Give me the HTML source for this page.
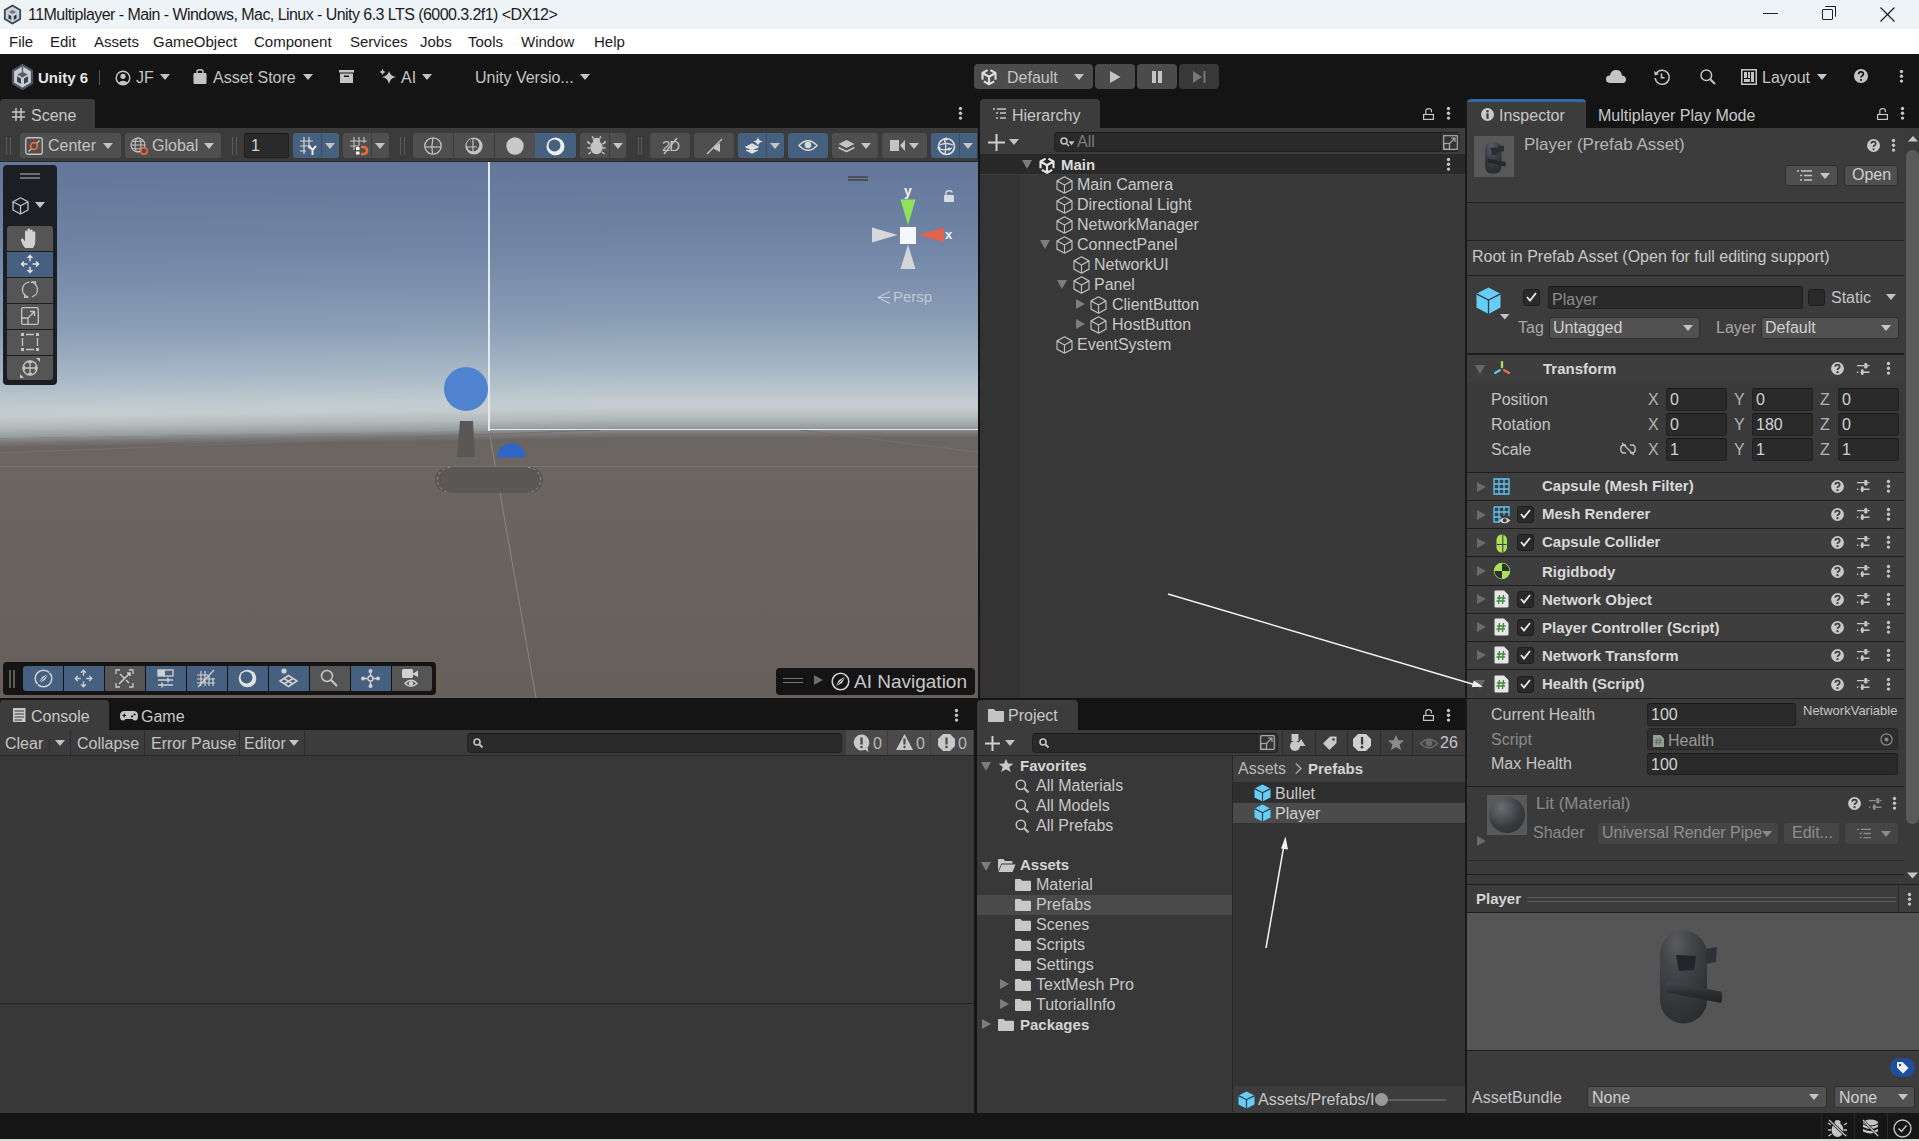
<!DOCTYPE html>
<html><head><meta charset="utf-8">
<style>
*{box-sizing:border-box;margin:0;padding:0}
html,body{width:1919px;height:1141px;overflow:hidden;background:#141414;font-family:"Liberation Sans",sans-serif}
.a{position:absolute}
.t{position:absolute;white-space:nowrap;font-size:16px;line-height:20px;color:#d2d2d2}
.b{font-weight:bold}
.dk{color:#1b1b1b;font-size:15px}
.btn{position:absolute;background:#585858;border-radius:3px}
.fld{position:absolute;background:#2a2a2a;border:1px solid #212121;border-top-color:#1a1a1a;border-radius:3px}
.dd{position:absolute;background:#515151;border:1px solid #303030;border-radius:3px}
.hl{position:absolute;height:1px;background:#232323}
.vl{position:absolute;width:1px;background:#232323}
svg{position:absolute;overflow:visible}
.tab{position:absolute;background:#3c3c3c;border-radius:4px 4px 0 0}
.car{position:absolute;width:0;height:0;border-left:5px solid transparent;border-right:5px solid transparent;border-top:6px solid #c4c4c4}
.tri{position:absolute;width:0;height:0;border-left:5px solid transparent;border-right:5px solid transparent;border-top:9px solid #7d7d7d}
.trir{position:absolute;width:0;height:0;border-top:5px solid transparent;border-bottom:5px solid transparent;border-left:9px solid #7d7d7d}
.kb{position:absolute;width:3px;height:13px;background:radial-gradient(circle at 1.5px 1.5px,#c4c4c4 1.5px,transparent 1.6px) 0 0/3px 5px repeat-y}
</style></head><body>
<!-- TITLE BAR -->
<div class="a" style="left:0;top:0;width:1919px;height:29px;background:#eef3f8"></div>
<svg style="left:4px;top:5px" width="17" height="19" viewBox="0 0 17 19"><path d="M8.5 0.5 L16.2 5 V14 L8.5 18.5 L0.8 14 V5Z" fill="#c9d2da" stroke="#3c4650" stroke-width="1.8" stroke-linejoin="round"/><path d="M8.5 5 L12 7 L8.5 9 L5 7Z" fill="#6a7682"/><path d="M4.5 9.5 L7.2 11 V15 L4.5 13.5Z M12.5 9.5 L9.8 11 V15 L12.5 13.5Z" fill="#2f3840"/></svg>
<div class="t dk" style="left:28px;top:5px;font-size:16px;letter-spacing:-0.55px">11Multiplayer - Main - Windows, Mac, Linux - Unity 6.3 LTS (6000.3.2f1) &lt;DX12&gt;</div>
<div class="a" style="left:1763px;top:13px;width:15px;height:1px;background:#222"></div>
<div class="a" style="left:1822px;top:9px;width:11px;height:11px;border:1px solid #222;border-radius:1px"></div>
<div class="a" style="left:1825px;top:6px;width:11px;height:11px;border-top:1px solid #222;border-right:1px solid #222;border-radius:1px"></div>
<svg style="left:1880px;top:7px" width="15" height="15"><path d="M0.5 0.5 L14.5 14.5 M14.5 0.5 L0.5 14.5" stroke="#222" stroke-width="1.3"/></svg>
<!-- MENU -->
<div class="a" style="left:0;top:29px;width:1919px;height:25px;background:#fff"></div>
<div class="t dk" style="left:9px;top:32px">File</div>
<div class="t dk" style="left:50px;top:32px">Edit</div>
<div class="t dk" style="left:94px;top:32px">Assets</div>
<div class="t dk" style="left:153px;top:32px">GameObject</div>
<div class="t dk" style="left:254px;top:32px">Component</div>
<div class="t dk" style="left:350px;top:32px">Services</div>
<div class="t dk" style="left:420px;top:32px">Jobs</div>
<div class="t dk" style="left:468px;top:32px">Tools</div>
<div class="t dk" style="left:521px;top:32px">Window</div>
<div class="t dk" style="left:594px;top:32px">Help</div>
<!-- MAIN TOOLBAR -->
<div class="a" style="left:0;top:54px;width:1919px;height:46px;background:#141414"></div>
<svg style="left:12px;top:64px" width="21" height="26" viewBox="0 0 21 26"><path d="M10.5 1 L20 6.7 V19.3 L10.5 25 L1 19.3 V6.7Z" fill="#c8ccd2" stroke="#4a5560" stroke-width="2.2" stroke-linejoin="round"/><path d="M10.5 8.5 L14.2 10.6 L10.5 12.7 L6.8 10.6Z M10.5 3 V9" fill="#55606a" stroke="#55606a" stroke-width="1.4"/><path d="M5 12.3 L9 14.6 V20 L5 17.7Z M16 12.3 L12 14.6 V20 L16 17.7Z" fill="#3a444e"/></svg>
<div class="t b" style="left:38px;top:68px;font-size:15px;color:#e6e6e6">Unity 6</div>
<div class="a" style="left:99px;top:70px;width:1px;height:15px;background:#555"></div>
<svg style="left:115px;top:70px" width="16" height="16" viewBox="0 0 16 16"><circle cx="8" cy="8" r="6.8" fill="none" stroke="#c4c4c4" stroke-width="1.5"/><circle cx="8" cy="6.3" r="2.6" fill="#c4c4c4"/><path d="M3.3 12.8 Q8 8.5 12.7 12.8 Q8 16 3.3 12.8Z" fill="#c4c4c4"/></svg>
<div class="t" style="left:136px;top:68px;color:#c4c4c4">JF</div>
<div class="car" style="left:160px;top:74px"></div>
<svg style="left:193px;top:69px" width="14" height="15" viewBox="0 0 14 15"><rect x="0.5" y="4" width="13" height="11" rx="1" fill="#c4c4c4"/><path d="M4 5 V2.5 Q4 0.8 7 0.8 Q10 0.8 10 2.5 V5" fill="none" stroke="#c4c4c4" stroke-width="1.4"/></svg>
<div class="t" style="left:213px;top:68px;color:#c4c4c4">Asset Store</div>
<div class="car" style="left:303px;top:74px"></div>
<svg style="left:339px;top:70px" width="15" height="13" viewBox="0 0 15 13"><rect x="0" y="0" width="15" height="2.5" fill="#c4c4c4"/><rect x="1" y="3.5" width="13" height="9.5" fill="#c4c4c4"/><rect x="5" y="5.5" width="5" height="1.5" fill="#141414"/></svg>
<svg style="left:379px;top:69px" width="18" height="15" viewBox="0 0 18 15"><path d="M10 2 Q11 7 17 8 Q11 9 10 15 Q9 9 3 8 Q9 7 10 2Z" fill="#c4c4c4"/><path d="M3.5 0 Q4 2.5 6.5 3 Q4 3.5 3.5 6 Q3 3.5 0.5 3 Q3 2.5 3.5 0Z" fill="#c4c4c4"/></svg>
<div class="t" style="left:401px;top:68px;color:#c4c4c4">AI</div>
<div class="car" style="left:422px;top:74px"></div>
<div class="t" style="left:475px;top:68px;color:#c4c4c4">Unity Versio...</div>
<div class="car" style="left:580px;top:74px"></div>
<!-- play controls -->
<div class="a" style="left:974px;top:64px;width:119px;height:25px;background:#4b4b4b;border-radius:4px"></div>
<svg style="left:981px;top:68px" width="16" height="17" viewBox="0 0 17 18"><path d="M1.6 12.5 V5.3 L7 2.2 M15.4 12.5 V5.3 L10 2.2 M1.6 5.3 L8.5 9.3 L15.4 5.3 M8.5 9.3 V16.8 M3 14.2 L8.5 17.2 L14 14.2" fill="none" stroke="#dcdcdc" stroke-width="2.3" stroke-linejoin="round"/></svg>
<div class="t" style="left:1007px;top:68px;color:#c4c4c4">Default</div>
<div class="car" style="left:1074px;top:74px"></div>
<div class="a" style="left:1095px;top:64px;width:40px;height:25px;background:#4b4b4b;border-radius:4px"></div>
<svg style="left:1110px;top:71px" width="11" height="12"><path d="M0 0 L10.5 6 L0 12Z" fill="#c4c4c4"/></svg>
<div class="a" style="left:1137px;top:64px;width:40px;height:25px;background:#4b4b4b;border-radius:4px"></div>
<div class="a" style="left:1152px;top:71px;width:3.5px;height:12px;background:#c4c4c4"></div>
<div class="a" style="left:1158px;top:71px;width:3.5px;height:12px;background:#c4c4c4"></div>
<div class="a" style="left:1179px;top:64px;width:40px;height:25px;background:#383838;border-radius:4px"></div>
<svg style="left:1193px;top:71px" width="13" height="12"><path d="M0 0 L9 6 L0 12Z" fill="#777"/><rect x="10.5" y="0" width="2" height="12" fill="#777"/></svg>
<!-- right toolbar icons -->
<svg style="left:1606px;top:70px" width="20" height="13" viewBox="0 0 20 13"><path d="M4.5 13 Q0 13 0 9.2 Q0 5.8 3.8 5.6 Q5 0 10.2 0 Q15.2 0 16 5.4 Q20 5.8 20 9.4 Q20 13 16 13Z" fill="#c4c4c4"/></svg>
<svg style="left:1654px;top:69px" width="16" height="16" viewBox="0 0 16 16"><path d="M2.3 4.5 A7 7 0 1 1 1.2 9" fill="none" stroke="#c4c4c4" stroke-width="1.5"/><path d="M0 2 L0.8 6.5 L5 5.3Z" fill="#c4c4c4"/><path d="M7.5 4.5 V8.8 H10.5" fill="none" stroke="#c4c4c4" stroke-width="1.6"/></svg>
<svg style="left:1700px;top:69px" width="16" height="16" viewBox="0 0 16 16"><circle cx="6.3" cy="6.3" r="5.3" fill="none" stroke="#c4c4c4" stroke-width="1.5"/><path d="M10.2 10.2 L15 15" stroke="#c4c4c4" stroke-width="2"/></svg>
<svg style="left:1741px;top:69px" width="16" height="16" viewBox="0 0 16 16"><rect x="0.75" y="0.75" width="14.5" height="14.5" fill="none" stroke="#c4c4c4" stroke-width="1.5"/><rect x="3" y="3" width="3" height="6" fill="#c4c4c4"/><rect x="7" y="3" width="2" height="6" fill="#c4c4c4"/><rect x="10" y="3" width="3" height="10" fill="#c4c4c4"/><rect x="3" y="10" width="6" height="3" fill="#c4c4c4"/></svg>
<div class="t" style="left:1762px;top:68px;color:#c4c4c4">Layout</div>
<div class="car" style="left:1817px;top:74px"></div>
<svg style="left:1854px;top:69px" width="14" height="14" viewBox="0 0 14 14"><circle cx="7" cy="7" r="7" fill="#c4c4c4"/><path d="M4.6 5.2 Q4.6 2.8 7 2.8 Q9.4 2.8 9.4 5 Q9.4 6.3 7.9 7 Q7 7.4 7 8.6" fill="none" stroke="#141414" stroke-width="1.7"/><circle cx="7" cy="11" r="1.1" fill="#141414"/></svg>
<svg style="left:1899px;top:69px" width="5" height="15"><circle cx="2.5" cy="2.5" r="1.7" fill="#c4c4c4"/><circle cx="2.5" cy="7.3" r="1.7" fill="#c4c4c4"/><circle cx="2.5" cy="12.1" r="1.7" fill="#c4c4c4"/></svg>
<!-- TAB STRIP (top) -->
<div class="tab" style="left:0;top:99px;width:95px;height:30px"></div>
<svg style="left:12px;top:108px" width="13" height="13" viewBox="0 0 13 13"><path d="M4 0 V13 M9 0 V13 M0 4 H13 M0 9 H13" stroke="#c4c4c4" stroke-width="1.5"/></svg>
<div class="t" style="left:31px;top:106px;color:#c8c8c8">Scene</div>
<svg style="left:958px;top:106px" width="5" height="15"><circle cx="2.5" cy="2.5" r="1.7" fill="#c4c4c4"/><circle cx="2.5" cy="7.3" r="1.7" fill="#c4c4c4"/><circle cx="2.5" cy="12.1" r="1.7" fill="#c4c4c4"/></svg>
<!-- SCENE TOOLBAR -->
<div class="a" style="left:0;top:128px;width:978px;height:34px;background:#3b3b3b"></div>
<div class="a" style="left:6px;top:137px;width:1px;height:18px;background:#5a5a5a"></div>
<div class="a" style="left:10px;top:137px;width:1px;height:18px;background:#5a5a5a"></div>
<div class="btn" style="left:20px;top:133px;width:101px;height:25px;background:#4f4f4f"></div>
<svg style="left:25px;top:137px" width="18" height="18" viewBox="0 0 18 18"><rect x="0.75" y="0.75" width="16.5" height="16.5" rx="2" fill="none" stroke="#c4c4c4" stroke-width="1.3"/><path d="M3.5 14.5 L14.5 3.5" stroke="#c4c4c4" stroke-width="1.2"/><circle cx="9" cy="9" r="3.4" fill="#4f4f4f" stroke="#f06a35" stroke-width="1.7"/></svg>
<div class="t" style="left:48px;top:136px;color:#c4c4c4">Center</div>
<div class="car" style="left:103px;top:143px"></div>
<div class="btn" style="left:125px;top:133px;width:96px;height:25px;background:#4f4f4f"></div>
<svg style="left:130px;top:137px" width="19" height="19" viewBox="0 0 19 19"><circle cx="8" cy="8" r="7" fill="none" stroke="#c4c4c4" stroke-width="1.2"/><ellipse cx="8" cy="8" rx="3" ry="7" fill="none" stroke="#c4c4c4" stroke-width="1.1"/><path d="M1 8 H15 M2.5 4.2 H13.5 M2.5 11.8 H13.5" stroke="#c4c4c4" stroke-width="1.1"/><circle cx="14" cy="14" r="3.2" fill="#4f4f4f" stroke="#f06a35" stroke-width="1.6"/></svg>
<div class="t" style="left:152px;top:136px;color:#c4c4c4">Global</div>
<div class="car" style="left:204px;top:143px"></div>
<div class="a" style="left:232px;top:137px;width:1px;height:18px;background:#5a5a5a"></div>
<div class="a" style="left:236px;top:137px;width:1px;height:18px;background:#5a5a5a"></div>
<div class="fld" style="left:244px;top:133px;width:45px;height:25px;background:#2a2a2a"></div>
<div class="t" style="left:251px;top:136px;color:#d2d2d2">1</div>
<div class="btn" style="left:293px;top:133px;width:46px;height:25px;background:#46607f"></div>
<div class="a" style="left:321px;top:133px;width:1px;height:25px;background:#3b4f68"></div>
<svg style="left:300px;top:137px" width="19" height="18" viewBox="0 0 19 18"><path d="M4 0 V17 M9 0 V12 M0 4 H13 M0 9 H11 M0 14 H6" stroke="#d8d8d8" stroke-width="1.2"/><path d="M9 9 L12.5 13 L16 9 M12.5 13 V18" fill="none" stroke="#e8e8e8" stroke-width="2"/></svg>
<div class="car" style="left:325px;top:143px"></div>
<div class="btn" style="left:343px;top:133px;width:46px;height:25px;background:#4f4f4f"></div>
<div class="a" style="left:371px;top:133px;width:1px;height:25px;background:#3b3b3b"></div>
<svg style="left:350px;top:137px" width="19" height="19" viewBox="0 0 19 19"><path d="M4 0 V13 M9 0 V9 M14 0 V6 M0 4 H17 M0 9 H9" stroke="#c4c4c4" stroke-width="1.1"/><path d="M11 10 H13.5 Q17 10 17 13.5 Q17 17 13.5 17 H11" fill="none" stroke="#f06a35" stroke-width="2.5"/><rect x="6" y="10" width="3.5" height="3" fill="#fff"/><rect x="6" y="14.5" width="3.5" height="3" fill="#fff"/></svg>
<div class="car" style="left:375px;top:143px"></div>
<div class="a" style="left:400px;top:137px;width:1px;height:18px;background:#5a5a5a"></div>
<div class="a" style="left:404px;top:137px;width:1px;height:18px;background:#5a5a5a"></div>
<div class="btn" style="left:413px;top:133px;width:163px;height:25px;background:#4f4f4f"></div>
<div class="a" style="left:453px;top:133px;width:1px;height:25px;background:#3b3b3b"></div>
<div class="a" style="left:494px;top:133px;width:1px;height:25px;background:#3b3b3b"></div>
<div class="a" style="left:535px;top:133px;width:41px;height:25px;background:#46607f;border-radius:0 3px 3px 0"></div>
<svg style="left:424px;top:137px" width="18" height="18" viewBox="0 0 18 18"><circle cx="9" cy="9" r="8.2" fill="none" stroke="#c4c4c4" stroke-width="1.3"/><path d="M1 10 H17" stroke="#c4c4c4" stroke-width="1.2"/><path d="M9 0.8 Q7 9 8.5 17.2" fill="none" stroke="#c4c4c4" stroke-width="1.2"/></svg>
<svg style="left:465px;top:137px" width="18" height="18" viewBox="0 0 18 18"><circle cx="9" cy="9" r="8.6" fill="#c4c4c4"/><circle cx="8" cy="8" r="6.3" fill="#4f4f4f"/><path d="M1.5 10 H12 M8 1.5 V14.5" stroke="#c4c4c4" stroke-width="1.2"/></svg>
<svg style="left:506px;top:137px" width="18" height="18" viewBox="0 0 18 18"><circle cx="9" cy="9" r="8.7" fill="#c8c8c8"/></svg>
<svg style="left:546px;top:137px" width="19" height="19" viewBox="0 0 19 19"><circle cx="9.5" cy="9.5" r="9" fill="#eee"/><circle cx="8.5" cy="8.5" r="6" fill="#46607f"/></svg>
<div class="btn" style="left:580px;top:133px;width:46px;height:25px;background:#4f4f4f"></div>
<div class="a" style="left:609px;top:133px;width:1px;height:25px;background:#3b3b3b"></div>
<svg style="left:587px;top:136px" width="19" height="19" viewBox="0 0 19 19"><ellipse cx="9.5" cy="11.5" rx="6.2" ry="6.8" fill="#c4c4c4"/><ellipse cx="9.5" cy="4.5" rx="3.6" ry="2.8" fill="#c4c4c4"/><path d="M6.5 2.5 L5 0.5 M12.5 2.5 L14 0.5 M3.5 8 L1 6.5 L1 5 M15.5 8 L18 6.5 L18 5 M3.2 12 H0.5 M15.8 12 H18.5 M4 16 L1.5 18 M15 16 L17.5 18" fill="none" stroke="#c4c4c4" stroke-width="1.5"/></svg>
<div class="car" style="left:613px;top:143px"></div>
<div class="a" style="left:638px;top:137px;width:1px;height:18px;background:#5a5a5a"></div>
<div class="a" style="left:641px;top:137px;width:1px;height:18px;background:#5a5a5a"></div>
<div class="btn" style="left:650px;top:133px;width:40px;height:25px;background:#4f4f4f"></div>
<div class="t" style="left:662px;top:136px;color:#c4c4c4;font-size:15px;letter-spacing:-1px">2D</div>
<svg style="left:662px;top:137px" width="17" height="18"><path d="M2 17 L15 1" stroke="#c4c4c4" stroke-width="1.4"/></svg>
<div class="btn" style="left:694px;top:133px;width:40px;height:25px;background:#4f4f4f"></div>
<svg style="left:706px;top:138px" width="16" height="16" viewBox="0 0 16 16"><path d="M8 9 L14 5 L14 14 L8 11Z" fill="#c4c4c4"/><path d="M1 16 L16 1" stroke="#c4c4c4" stroke-width="1.4"/></svg>
<div class="btn" style="left:738px;top:133px;width:46px;height:25px;background:#46607f"></div>
<div class="a" style="left:766px;top:133px;width:1px;height:25px;background:#3b4f68"></div>
<svg style="left:746px;top:137px" width="17" height="17" viewBox="0 0 17 17"><path d="M0 10 L6 7 L12 10 L6 13Z M0 13 L6 16 L12 13" fill="#e0e0e0" stroke="#e0e0e0" stroke-width="1.2"/><path d="M12 0 Q12.7 4 17 4.5 Q12.7 5 12 9 Q11.3 5 7 4.5 Q11.3 4 12 0Z" fill="#e0e0e0"/></svg>
<div class="car" style="left:770px;top:143px"></div>
<div class="btn" style="left:788px;top:133px;width:40px;height:25px;background:#46607f"></div>
<svg style="left:798px;top:139px" width="20" height="13" viewBox="0 0 20 13"><path d="M1 6.5 Q10 -3 19 6.5 Q10 16 1 6.5Z" fill="none" stroke="#d8d8d8" stroke-width="1.5"/><circle cx="10" cy="6" r="3.3" fill="#d8d8d8"/></svg>
<div class="btn" style="left:832px;top:133px;width:46px;height:25px;background:#4f4f4f"></div>
<svg style="left:838px;top:139px" width="17" height="14" viewBox="0 0 17 14"><path d="M0.5 5 L8.5 1 L16.5 5 L8.5 9Z" fill="#c4c4c4"/><path d="M0.5 8.5 L8.5 12.5 L16.5 8.5" fill="none" stroke="#c4c4c4" stroke-width="1.6"/></svg>
<div class="car" style="left:861px;top:143px"></div>
<div class="btn" style="left:882px;top:133px;width:45px;height:25px;background:#4f4f4f"></div>
<svg style="left:890px;top:139px" width="15" height="13" viewBox="0 0 15 13"><rect x="0" y="1" width="9" height="11" fill="#c4c4c4"/><path d="M10 6.5 L15 1 V12Z" fill="#c4c4c4"/></svg>
<div class="car" style="left:909px;top:143px"></div>
<div class="btn" style="left:931px;top:133px;width:46px;height:25px;background:#46607f;border-radius:3px 0 0 3px"></div>
<div class="a" style="left:959px;top:133px;width:1px;height:25px;background:#3b4f68"></div>
<svg style="left:937px;top:137px" width="19" height="19" viewBox="0 0 19 19"><circle cx="9.5" cy="9.5" r="8" fill="none" stroke="#e0e0e0" stroke-width="1.6"/><path d="M3 8 Q9 5 16 8 M7 2 Q10 9 8 17 M2 12 Q9 14 15 11" fill="none" stroke="#e0e0e0" stroke-width="1.3"/><circle cx="9" cy="2" r="1.6" fill="#e0e0e0"/><circle cx="2" cy="11" r="1.6" fill="#e0e0e0"/><circle cx="12" cy="12" r="1.6" fill="#e0e0e0"/></svg>
<div class="car" style="left:963px;top:143px"></div>
<div class="a" style="left:0;top:161px;width:977px;height:1px;background:#282828"></div>
<!-- SCENE VIEW -->
<div class="a" style="left:0;top:162px;width:978px;height:40px;background:#63779a"></div>
<div class="a" style="left:0;top:429px;width:978px;height:269px;background:linear-gradient(to bottom,#8c9091 0px,#7a7979 4px,#6c6663 9px,#6a6461 40%,#665f5b 100%)"></div>
<div class="a" style="left:620px;top:162px;width:358px;height:267px;background:linear-gradient(to bottom,#63779a 0%,#7084a6 30%,#8a9eb6 60%,#a8b8c6 78%,#c2ccd0 89%,#c4ccce 92%,#b3babc 96%,#9aa1a3 99%,#8f9697 100%)"></div>
<div class="a" style="left:0;top:162px;width:621px;height:267px;transform-origin:621px 0;transform:skewY(-0.85deg);background:linear-gradient(to bottom,#63779a 0%,#7084a6 30%,#8a9eb6 60%,#a8b8c6 78%,#c2ccd0 89%,#c4ccce 92%,#b3babc 96%,#9aa1a3 99%,#8f9697 100%)"></div>
<div class="a" style="left:0;top:429px;width:621px;height:12px;transform-origin:621px 0;transform:skewY(-0.85deg);background:linear-gradient(to bottom,#8c9091 0px,#7a7979 4px,#6c6663 9px,#6a6461 12px)"></div>
<div class="a" style="left:0;top:466px;width:978px;height:1px;background:#76716f"></div>
<svg style="left:0;top:162px" width="978" height="536"><path d="M489 268 L536 536" stroke="#8a8682" stroke-width="1"/><path d="M800 268 L978 290" stroke="#75706e" stroke-width="1"/><path d="M0 291 L600 268" stroke="#75706e" stroke-width="1"/></svg>
<div class="a" style="left:488px;top:162px;width:2px;height:269px;background:#e6e9ec"></div>
<div class="a" style="left:488px;top:428.5px;width:490px;height:1.8px;background:#e6e6e6"></div>
<div class="a" style="left:444px;top:367px;width:44px;height:44px;border-radius:50%;background:#5083cf"></div>
<svg style="left:457px;top:421px" width="19" height="37"><path d="M3 0 H16 L18 36 H0Z" fill="#5a5857"/></svg>
<svg style="left:497px;top:442px" width="29" height="16"><path d="M0 15.5 A14 14 0 0 1 28.5 15.5Z" fill="#2f67c4"/></svg>
<div class="a" style="left:435px;top:467px;width:108px;height:26px;border-radius:13px;background:#5a5755"></div><svg style="left:435px;top:467px" width="108" height="26"><path d="M15 0.5 A12.5 12.5 0 0 0 15 25.5 M93 0.5 A12.5 12.5 0 0 1 93 25.5" fill="none" stroke="#9a9794" stroke-width="1" stroke-dasharray="2.5 3"/></svg>
<!-- gizmo -->
<div class="a" style="left:848px;top:176px;width:20px;height:1.5px;background:#4d4f54"></div>
<div class="a" style="left:848px;top:179px;width:20px;height:1.5px;background:#4d4f54"></div>
<div class="t b" style="left:904px;top:181px;font-size:14px;color:#f0f0f0">y</div>
<svg style="left:870px;top:195px" width="90" height="80"><path d="M30.5 4.5 L45.5 4.5 L38 30Z" fill="#8fe35a"/><path d="M48.5 40 L74 32.5 L74 47Z" fill="#e4604f"/><path d="M27.5 40 L2 32.5 L2 47.5Z" fill="#d8d8d8"/><path d="M38 49.5 L30.5 74 L45.5 74Z" fill="#d5d5d5"/><rect x="30" y="32" width="16" height="17" fill="#f4f7fb"/></svg>
<div class="t b" style="left:945px;top:225px;font-size:13px;color:#f0f0f0">x</div>
<svg style="left:944px;top:190px" width="10" height="12"><path d="M2 5 V3 Q2 0.8 5 0.8 Q8 0.8 8 2.5" fill="none" stroke="#d8dce0" stroke-width="1.4"/><rect x="0" y="5" width="10" height="7" rx="1" fill="#d8dce0"/></svg>
<svg style="left:877px;top:291px" width="14" height="13"><path d="M13 0.5 L1 6.5 L13 12.5 M1 6.5 H13" fill="none" stroke="#c3ccd6" stroke-width="1.1"/></svg>
<div class="t" style="left:893px;top:287px;font-size:15px;color:#c0c9d3">Persp</div>
<!-- left tools overlay -->
<div class="a" style="left:3px;top:165px;width:54px;height:220px;background:#1b1e23;border-radius:4px"></div>
<div class="a" style="left:20px;top:173px;width:20px;height:1.5px;background:#6a6d72"></div>
<div class="a" style="left:20px;top:177px;width:20px;height:1.5px;background:#6a6d72"></div>
<svg style="left:12px;top:197px" width="18" height="18" viewBox="0 0 18 18"><path d="M8.5 0.8 L16 4.8 V13 L8.5 17 L1 13 V4.8Z M1 4.8 L8.5 8.8 L16 4.8 M8.5 8.8 V17" fill="none" stroke="#c4c4c4" stroke-width="1.3" stroke-linejoin="round"/></svg>
<div class="car" style="left:35px;top:202px"></div>
<div class="a" style="left:7px;top:226px;width:46px;height:25px;background:#555;border-radius:3px 3px 0 0"></div>
<div class="a" style="left:7px;top:252px;width:46px;height:25px;background:#46607f"></div>
<div class="a" style="left:7px;top:278px;width:46px;height:25px;background:#555"></div>
<div class="a" style="left:7px;top:304px;width:46px;height:25px;background:#555"></div>
<div class="a" style="left:7px;top:330px;width:46px;height:25px;background:#555"></div>
<div class="a" style="left:7px;top:356px;width:46px;height:24px;background:#555;border-radius:0 0 3px 3px"></div>
<svg style="left:20px;top:228px" width="20" height="21" viewBox="0 0 20 21"><path d="M5 20 Q2.5 17 1 12.5 Q0.5 10.8 2 10.5 Q3.2 10.3 4 12 L5 13.5 V4 Q5 2.6 6.3 2.6 Q7.5 2.6 7.5 4 V10 V2 Q7.5 0.6 8.8 0.6 Q10.1 0.6 10.1 2 V10 V2.8 Q10.1 1.4 11.4 1.4 Q12.7 1.4 12.7 2.8 V10.5 V4.6 Q12.7 3.3 14 3.3 Q15.3 3.3 15.3 4.6 V13.5 Q15.3 17.5 13 20Z" fill="#d0d0d0"/></svg>
<svg style="left:20px;top:254px" width="20" height="20" viewBox="0 0 20 20"><path d="M10 1.5 V7.3 M10 12.7 V18.5 M1.5 10 H7.3 M12.7 10 H18.5 M7.5 4 L10 1.5 L12.5 4 M7.5 16 L10 18.5 L12.5 16 M4 7.5 L1.5 10 L4 12.5 M16 7.5 L18.5 10 L16 12.5" fill="none" stroke="#e6e6e6" stroke-width="1.4"/></svg>
<svg style="left:21px;top:280px" width="18" height="20" viewBox="0 0 18 20"><path d="M8.3 2.1 A7.5 7.5 0 0 0 7 16.8 M10.9 16.8 A7.5 7.5 0 0 0 9.7 2.1" fill="none" stroke="#c4c4c4" stroke-width="1.3"/><path d="M3.6 13.6 V17.4 H7.4 M14.4 5.6 V1.8 H10.6" fill="none" stroke="#c4c4c4" stroke-width="1.3"/></svg>
<svg style="left:21px;top:307px" width="18" height="18" viewBox="0 0 18 18"><rect x="0.7" y="0.7" width="16.6" height="16.6" rx="1.5" fill="none" stroke="#c4c4c4" stroke-width="1.3"/><path d="M0.7 11 H7 V17.3" fill="none" stroke="#c4c4c4" stroke-width="1.3"/><path d="M7 11 L13.5 4.5 M9 4.5 H13.5 V9" fill="none" stroke="#c4c4c4" stroke-width="1.3"/></svg>
<svg style="left:21px;top:333px" width="18" height="18" viewBox="0 0 18 18"><path d="M5 1.5 H13 M5 16.5 H13 M1.5 5 V13 M16.5 5 V13" stroke="#c4c4c4" stroke-width="1.3"/><rect x="0" y="0" width="3" height="3" fill="#c4c4c4"/><rect x="15" y="0" width="3" height="3" fill="#c4c4c4"/><rect x="0" y="15" width="3" height="3" fill="#c4c4c4"/><rect x="15" y="15" width="3" height="3" fill="#c4c4c4"/></svg>
<svg style="left:20px;top:358px" width="20" height="20" viewBox="0 0 20 20"><circle cx="10" cy="10" r="7" fill="none" stroke="#c4c4c4" stroke-width="1.3"/><path d="M10 3 V17 M3 10 H17 M8 5 L10 3 L12 5 M8 15 L10 17 L12 15 M5 8 L3 10 L5 12 M15 8 L17 10 L15 12" fill="none" stroke="#c4c4c4" stroke-width="1.3"/><path d="M16 0 H20 V4Z M0 20 V16 L4 20Z" fill="#c4c4c4"/></svg>
<!-- bottom overlay toolbar -->
<div class="a" style="left:3px;top:662px;width:433px;height:33px;background:#141414;border-radius:4px"></div>
<div class="a" style="left:9px;top:670px;width:1.5px;height:18px;background:#5a5a5a"></div>
<div class="a" style="left:13px;top:670px;width:1.5px;height:18px;background:#5a5a5a"></div>
<div class="a" style="left:23px;top:666px;width:409px;height:25px;background:#141414;border-radius:3px;overflow:hidden">
<div class="a" style="left:0;top:0;width:40px;height:25px;background:#46607f"></div>
<div class="a" style="left:41px;top:0;width:40px;height:25px;background:#46607f"></div>
<div class="a" style="left:82px;top:0;width:40px;height:25px;background:#555"></div>
<div class="a" style="left:123px;top:0;width:40px;height:25px;background:#46607f"></div>
<div class="a" style="left:164px;top:0;width:40px;height:25px;background:#46607f"></div>
<div class="a" style="left:205px;top:0;width:40px;height:25px;background:#46607f"></div>
<div class="a" style="left:246px;top:0;width:40px;height:25px;background:#46607f"></div>
<div class="a" style="left:287px;top:0;width:40px;height:25px;background:#555"></div>
<div class="a" style="left:328px;top:0;width:40px;height:25px;background:#46607f"></div>
<div class="a" style="left:369px;top:0;width:40px;height:25px;background:#555"></div>
</div>
<svg style="left:34px;top:669px" width="19" height="19" viewBox="0 0 19 19"><circle cx="9.5" cy="9.5" r="8.3" fill="none" stroke="#d0d0d0" stroke-width="1.5"/><path d="M14 5 L8 8 L5 14 L11 11Z" fill="#d0d0d0"/><path d="M3 16 L16 3" stroke="#46607f" stroke-width="1"/></svg>
<svg style="left:74px;top:669px" width="19" height="19" viewBox="0 0 19 19"><path d="M9.5 1.2 V6.8 M9.5 12.2 V17.8 M1.2 9.5 H6.8 M12.2 9.5 H17.8 M7 3.7 L9.5 1.2 L12 3.7 M7 15.3 L9.5 17.8 L12 15.3 M3.7 7 L1.2 9.5 L3.7 12 M15.3 7 L17.8 9.5 L15.3 12" fill="none" stroke="#d0d0d0" stroke-width="1.3"/></svg>
<svg style="left:115px;top:669px" width="19" height="19" viewBox="0 0 19 19"><path d="M1 5 V1 H5 M14 1 H18 V5 M18 14 V18 H14 M5 18 H1 V14" fill="none" stroke="#c8c8c8" stroke-width="1.3"/><path d="M4 15 L15 4 M5 5 L9 9 M11 11 L14 14 M12 4 H15 V7" fill="none" stroke="#c8c8c8" stroke-width="1.6"/></svg>
<svg style="left:157px;top:669px" width="17" height="19" viewBox="0 0 17 19"><rect x="1" y="1" width="15" height="6" fill="none" stroke="#d0d0d0" stroke-width="1.3"/><rect x="1" y="1" width="7" height="6" fill="#d0d0d0"/><path d="M1 11 H16 M1 16 H16 M11 8.5 V13.5 M5 13.5 V18.5" stroke="#d0d0d0" stroke-width="1.5"/></svg>
<svg style="left:197px;top:669px" width="19" height="19" viewBox="0 0 19 19"><path d="M4 2 V17 M8 2 V17 M12 6 V17 M16 9 V17 M0 6 H11 M0 10 H18 M0 14 H18 M1 18 L17 1" stroke="#d0d0d0" stroke-width="1.2"/></svg>
<svg style="left:238px;top:669px" width="19" height="19" viewBox="0 0 19 19"><circle cx="9.5" cy="9.5" r="8.8" fill="#e0e0e0"/><circle cx="8.5" cy="8.5" r="5.9" fill="#46607f"/></svg>
<svg style="left:279px;top:668px" width="19" height="21" viewBox="0 0 19 21"><circle cx="5" cy="3" r="2.6" fill="#d0d0d0"/><path d="M1 13 L9.5 7.5 L18 13 L9.5 18.5Z M5 10.5 L14 16 M14 10.5 L5 16" fill="none" stroke="#d0d0d0" stroke-width="1.5"/></svg>
<svg style="left:320px;top:669px" width="18" height="18" viewBox="0 0 18 18"><circle cx="7" cy="7" r="5.5" fill="none" stroke="#c8c8c8" stroke-width="1.5"/><path d="M11 11 L17 17" stroke="#c8c8c8" stroke-width="2"/></svg>
<svg style="left:361px;top:669px" width="19" height="19" viewBox="0 0 19 19"><circle cx="9.5" cy="9.5" r="2.5" fill="none" stroke="#d0d0d0" stroke-width="1.4"/><path d="M9.5 1 V7 M9.5 12 V18 M1 9.5 H7 M12 9.5 H18" stroke="#d0d0d0" stroke-width="1.4"/><circle cx="9.5" cy="2" r="2" fill="#d0d0d0"/><circle cx="9.5" cy="17" r="2" fill="#d0d0d0"/><circle cx="2" cy="9.5" r="2" fill="#d0d0d0"/><circle cx="17" cy="9.5" r="2" fill="#d0d0d0"/></svg>
<svg style="left:401px;top:668px" width="20" height="21" viewBox="0 0 20 21"><rect x="1" y="1" width="11" height="9" rx="1.5" fill="#d0d0d0"/><path d="M12 5.5 L17 2.5 V9 L12 6.5Z" fill="#d0d0d0"/><path d="M4 15.5 Q10 9 16 15.5 Q10 21 4 15.5Z" fill="none" stroke="#d0d0d0" stroke-width="1.5"/><circle cx="10" cy="15.5" r="2.2" fill="#d0d0d0"/></svg>
<!-- AI Navigation overlay -->
<div class="a" style="left:776px;top:668px;width:199px;height:27px;background:#141414;border-radius:4px"></div>
<div class="a" style="left:783px;top:678px;width:20px;height:1.3px;background:#777"></div>
<div class="a" style="left:783px;top:682px;width:20px;height:1.3px;background:#777"></div>
<svg style="left:814px;top:675px" width="10" height="10"><path d="M0 0 L9 5 L0 10Z" fill="#6b6b6b"/></svg>
<svg style="left:831px;top:672px" width="19" height="19" viewBox="0 0 19 19"><circle cx="9.5" cy="9.5" r="8.3" fill="none" stroke="#d0d0d0" stroke-width="1.6"/><path d="M14.5 4.5 L8 8 L4.5 14.5 L11 11Z" fill="#d0d0d0"/><path d="M4.5 14.5 L14.5 4.5" stroke="#141414" stroke-width="0.8"/></svg>
<div class="t" style="left:854px;top:671px;font-size:19px;line-height:22px;color:#c8c8c8">AI Navigation</div>
<!-- CONSOLE -->
<div class="a" style="left:0;top:698px;width:977px;height:32px;background:#141414"></div>
<div class="tab" style="left:0;top:700px;width:109px;height:30px"></div>
<svg style="left:13px;top:708px" width="13" height="14" viewBox="0 0 13 14"><rect x="0" y="0" width="12.5" height="14" fill="#c8c8c8"/><path d="M1.5 3 H11 M1.5 6 H11 M1.5 9 H11 M1.5 12 H9" stroke="#3c3c3c" stroke-width="1.1"/></svg>
<div class="t" style="left:31px;top:707px;color:#c8c8c8">Console</div>
<svg style="left:120px;top:711px" width="18" height="10" viewBox="0 0 18 10"><path d="M4.5 0 H13.5 Q18 0 18 5 Q18 9.5 15 9.5 Q13.5 9.5 12.5 8 H5.5 Q4.5 9.5 3 9.5 Q0 9.5 0 5 Q0 0 4.5 0Z" fill="#c4c4c4"/><path d="M2.3 4.5 H6.3 M4.3 2.5 V6.5" stroke="#141414" stroke-width="1.2"/><circle cx="12" cy="5.5" r="1.1" fill="#141414"/><circle cx="14.5" cy="3.5" r="1.1" fill="#141414"/></svg>
<div class="t" style="left:141px;top:707px;color:#c8c8c8">Game</div>
<svg style="left:954px;top:708px" width="5" height="15"><circle cx="2.5" cy="2.5" r="1.7" fill="#c4c4c4"/><circle cx="2.5" cy="7.3" r="1.7" fill="#c4c4c4"/><circle cx="2.5" cy="12.1" r="1.7" fill="#c4c4c4"/></svg>
<div class="a" style="left:0;top:730px;width:977px;height:26px;background:#3c3c3c"></div>
<div class="a" style="left:0;top:755px;width:977px;height:1px;background:#282828"></div>
<div class="t" style="left:5px;top:734px;color:#c4c4c4">Clear</div>
<div class="a" style="left:49px;top:739px;width:1px;height:13px;background:#2f2f2f"></div>
<div class="car" style="left:55px;top:740px"></div>
<div class="a" style="left:70px;top:730px;width:1px;height:25px;background:#2c2c2c"></div>
<div class="t" style="left:77px;top:734px;color:#c4c4c4">Collapse</div>
<div class="a" style="left:144px;top:730px;width:1px;height:25px;background:#2c2c2c"></div>
<div class="t" style="left:151px;top:734px;color:#c4c4c4">Error Pause</div>
<div class="a" style="left:239px;top:730px;width:1px;height:25px;background:#2c2c2c"></div>
<div class="t" style="left:244px;top:734px;color:#c4c4c4">Editor</div>
<div class="car" style="left:289px;top:740px"></div>
<div class="a" style="left:304px;top:730px;width:1px;height:25px;background:#2c2c2c"></div>
<div class="fld" style="left:467px;top:733px;width:375px;height:20px;border-radius:4px"></div>
<svg style="left:473px;top:738px" width="10" height="10"><circle cx="4" cy="4" r="3" fill="none" stroke="#c4c4c4" stroke-width="1.6"/><path d="M6 6 L9.5 9.5" stroke="#c4c4c4" stroke-width="1.8"/></svg>
<div class="a" style="left:846px;top:730px;width:41px;height:25px;background:#4a4a4a"></div>
<div class="a" style="left:888px;top:730px;width:42px;height:25px;background:#4a4a4a"></div>
<div class="a" style="left:931px;top:730px;width:42px;height:25px;background:#4a4a4a"></div>
<svg style="left:853px;top:734px" width="17" height="18" viewBox="0 0 17 18"><path d="M8.5 0.5 A8 8 0 1 0 12 15.8 L15.5 18 L14.5 13.5 A8 8 0 0 0 8.5 0.5Z" fill="#c8c8c8"/><rect x="7.3" y="3.5" width="2.4" height="7" fill="#4a4a4a"/><circle cx="8.5" cy="13" r="1.3" fill="#4a4a4a"/></svg>
<div class="t" style="left:873px;top:734px;color:#b8b8b8">0</div>
<svg style="left:896px;top:734px" width="17" height="16" viewBox="0 0 17 16"><path d="M8.5 0 L17 16 H0Z" fill="#c8c8c8"/><rect x="7.4" y="4.5" width="2.2" height="6" fill="#4a4a4a"/><circle cx="8.5" cy="13" r="1.2" fill="#4a4a4a"/></svg>
<div class="t" style="left:916px;top:734px;color:#b8b8b8">0</div>
<svg style="left:938px;top:734px" width="17" height="17" viewBox="0 0 17 17"><path d="M5 0 H12 L17 5 V12 L12 17 H5 L0 12 V5Z" fill="#c8c8c8"/><rect x="7.4" y="3.5" width="2.2" height="7" fill="#4a4a4a"/><circle cx="8.5" cy="13" r="1.3" fill="#4a4a4a"/></svg>
<div class="t" style="left:958px;top:734px;color:#b8b8b8">0</div>
<div class="a" style="left:0;top:756px;width:977px;height:357px;background:#383838"></div>
<div class="a" style="left:0;top:1003px;width:977px;height:1px;background:#252525"></div>
<!-- vertical divider -->
<div class="a" style="left:978px;top:100px;width:2px;height:598px;background:#141414"></div>
<!-- STATUS BAR -->
<div class="a" style="left:0;top:1113px;width:1919px;height:28px;background:#161616"></div>
<div class="a" style="left:0;top:1139px;width:1919px;height:2px;background:#dcd9d4"></div>
<!-- HIERARCHY -->
<div class="tab" style="left:980px;top:99px;width:120px;height:30px"></div>
<svg style="left:993px;top:108px" width="13" height="12" viewBox="0 0 13 12"><path d="M0 1 H2 M4 1 H13 M3 5 H5 M7 5 H13 M3 10 H5 M7 10 H13" stroke="#c4c4c4" stroke-width="1.4"/></svg>
<div class="t" style="left:1012px;top:106px;color:#c8c8c8">Hierarchy</div>
<svg style="left:1423px;top:108px" width="11" height="12" viewBox="0 0 11 12"><path d="M2.8 6.5 V3 Q2.8 0.7 5.6 0.7 Q8.4 0.7 8.4 2.6 V4.2" fill="none" stroke="#c4c4c4" stroke-width="1.2"/><rect x="0.6" y="6.5" width="9.8" height="4.9" fill="none" stroke="#c4c4c4" stroke-width="1.2"/></svg>
<svg style="left:1446px;top:106px" width="5" height="15"><circle cx="2.5" cy="2.5" r="1.7" fill="#c4c4c4"/><circle cx="2.5" cy="7.3" r="1.7" fill="#c4c4c4"/><circle cx="2.5" cy="12.1" r="1.7" fill="#c4c4c4"/></svg>
<div class="a" style="left:980px;top:128px;width:485px;height:27px;background:#3c3c3c"></div>
<svg style="left:988px;top:134px" width="17" height="17"><path d="M8.5 0 V17 M0 8.5 H17" stroke="#d0d0d0" stroke-width="2"/></svg>
<div class="car" style="left:1009px;top:139px"></div>
<div class="fld" style="left:1054px;top:132px;width:406px;height:20px;border-radius:4px"></div>
<svg style="left:1060px;top:137px" width="13" height="11"><circle cx="4" cy="4" r="3" fill="none" stroke="#c4c4c4" stroke-width="1.5"/><path d="M6 6 L9 9 M10 5 L13 5 L11.5 7Z" stroke="#c4c4c4" stroke-width="1.5" fill="#c4c4c4"/></svg>
<div class="t" style="left:1077px;top:132px;color:#7d7d7d">All</div>
<div class="a" style="left:1440px;top:133px;width:20px;height:18px;background:#333;border-left:1px solid #222"></div>
<svg style="left:1443px;top:135px" width="15" height="15" viewBox="0 0 15 15"><rect x="0.7" y="0.7" width="13.6" height="13.6" fill="none" stroke="#a8a8a8" stroke-width="1.2"/><rect x="0.7" y="8.5" width="5.8" height="5.8" fill="none" stroke="#a8a8a8" stroke-width="1.2"/><path d="M6.5 8.5 L12 3 M8 3 H12 V7" fill="none" stroke="#a8a8a8" stroke-width="1.2"/></svg>
<div class="a" style="left:980px;top:155px;width:485px;height:543px;background:#383838"></div>
<div class="a" style="left:980px;top:175px;width:40px;height:523px;background:#333333"></div>
<div class="a" style="left:980px;top:154px;width:485px;height:20px;background:#292929"></div>
<div class="a" style="left:980px;top:174px;width:485px;height:1px;background:#3e3e3e"></div>
<div class="tri" style="left:1022px;top:160px"></div>
<svg style="left:1039px;top:156px" width="16" height="18" viewBox="0 0 17 18"><path d="M1.6 12.5 V5.3 L7 2.2 M15.4 12.5 V5.3 L10 2.2 M1.6 5.3 L8.5 9.3 L15.4 5.3 M8.5 9.3 V16.8 M3 14.2 L8.5 17.2 L14 14.2" fill="none" stroke="#e6e6e6" stroke-width="2.3" stroke-linejoin="round"/></svg>
<div class="t b" style="left:1061px;top:155px;font-size:15px;color:#dcdcdc">Main</div>
<svg style="left:1446px;top:157px" width="5" height="15"><circle cx="2.5" cy="2.5" r="1.7" fill="#c4c4c4"/><circle cx="2.5" cy="7.3" r="1.7" fill="#c4c4c4"/><circle cx="2.5" cy="12.1" r="1.7" fill="#c4c4c4"/></svg>
<svg style="left:1056px;top:176px" width="17" height="18" viewBox="0 0 17 18"><path d="M8.5 0.8 L16 4.9 V13.1 L8.5 17.2 L1 13.1 V4.9Z M1 4.9 L8.5 9 L16 4.9 M8.5 9 V17.2" fill="none" stroke="#bdbdbd" stroke-width="1.2" stroke-linejoin="round"/></svg>
<div class="t" style="left:1077px;top:175px;color:#c8c8c8">Main Camera</div>
<svg style="left:1056px;top:196px" width="17" height="18" viewBox="0 0 17 18"><path d="M8.5 0.8 L16 4.9 V13.1 L8.5 17.2 L1 13.1 V4.9Z M1 4.9 L8.5 9 L16 4.9 M8.5 9 V17.2" fill="none" stroke="#bdbdbd" stroke-width="1.2" stroke-linejoin="round"/></svg>
<div class="t" style="left:1077px;top:195px;color:#c8c8c8">Directional Light</div>
<svg style="left:1056px;top:216px" width="17" height="18" viewBox="0 0 17 18"><path d="M8.5 0.8 L16 4.9 V13.1 L8.5 17.2 L1 13.1 V4.9Z M1 4.9 L8.5 9 L16 4.9 M8.5 9 V17.2" fill="none" stroke="#bdbdbd" stroke-width="1.2" stroke-linejoin="round"/></svg>
<div class="t" style="left:1077px;top:215px;color:#c8c8c8">NetworkManager</div>
<svg style="left:1056px;top:236px" width="17" height="18" viewBox="0 0 17 18"><path d="M8.5 0.8 L16 4.9 V13.1 L8.5 17.2 L1 13.1 V4.9Z M1 4.9 L8.5 9 L16 4.9 M8.5 9 V17.2" fill="none" stroke="#bdbdbd" stroke-width="1.2" stroke-linejoin="round"/></svg>
<div class="t" style="left:1077px;top:235px;color:#c8c8c8">ConnectPanel</div>
<div class="tri" style="left:1040px;top:240px"></div>
<svg style="left:1073px;top:256px" width="17" height="18" viewBox="0 0 17 18"><path d="M8.5 0.8 L16 4.9 V13.1 L8.5 17.2 L1 13.1 V4.9Z M1 4.9 L8.5 9 L16 4.9 M8.5 9 V17.2" fill="none" stroke="#bdbdbd" stroke-width="1.2" stroke-linejoin="round"/></svg>
<div class="t" style="left:1094px;top:255px;color:#c8c8c8">NetworkUI</div>
<svg style="left:1073px;top:276px" width="17" height="18" viewBox="0 0 17 18"><path d="M8.5 0.8 L16 4.9 V13.1 L8.5 17.2 L1 13.1 V4.9Z M1 4.9 L8.5 9 L16 4.9 M8.5 9 V17.2" fill="none" stroke="#bdbdbd" stroke-width="1.2" stroke-linejoin="round"/></svg>
<div class="t" style="left:1094px;top:275px;color:#c8c8c8">Panel</div>
<div class="tri" style="left:1057px;top:280px"></div>
<svg style="left:1090px;top:296px" width="17" height="18" viewBox="0 0 17 18"><path d="M8.5 0.8 L16 4.9 V13.1 L8.5 17.2 L1 13.1 V4.9Z M1 4.9 L8.5 9 L16 4.9 M8.5 9 V17.2" fill="none" stroke="#bdbdbd" stroke-width="1.2" stroke-linejoin="round"/></svg>
<div class="t" style="left:1112px;top:295px;color:#c8c8c8">ClientButton</div>
<div class="trir" style="left:1076px;top:299px"></div>
<svg style="left:1090px;top:316px" width="17" height="18" viewBox="0 0 17 18"><path d="M8.5 0.8 L16 4.9 V13.1 L8.5 17.2 L1 13.1 V4.9Z M1 4.9 L8.5 9 L16 4.9 M8.5 9 V17.2" fill="none" stroke="#bdbdbd" stroke-width="1.2" stroke-linejoin="round"/></svg>
<div class="t" style="left:1112px;top:315px;color:#c8c8c8">HostButton</div>
<div class="trir" style="left:1076px;top:319px"></div>
<svg style="left:1056px;top:336px" width="17" height="18" viewBox="0 0 17 18"><path d="M8.5 0.8 L16 4.9 V13.1 L8.5 17.2 L1 13.1 V4.9Z M1 4.9 L8.5 9 L16 4.9 M8.5 9 V17.2" fill="none" stroke="#bdbdbd" stroke-width="1.2" stroke-linejoin="round"/></svg>
<div class="t" style="left:1077px;top:335px;color:#c8c8c8">EventSystem</div>
<!-- PROJECT -->
<div class="a" style="left:977px;top:698px;width:488px;height:32px;background:#141414"></div>
<div class="tab" style="left:977px;top:700px;width:101px;height:30px"></div>
<svg style="left:988px;top:709px" width="16" height="13" viewBox="0 0 16 13"><path d="M0 1 Q0 0 1 0 H6 L7.5 2 H15 Q16 2 16 3 V12 Q16 13 15 13 H1 Q0 13 0 12Z" fill="#c4c4c4"/></svg>
<div class="t" style="left:1008px;top:706px;color:#c8c8c8">Project</div>
<svg style="left:1423px;top:709px" width="11" height="12" viewBox="0 0 11 12"><path d="M2.8 6.5 V3 Q2.8 0.7 5.6 0.7 Q8.4 0.7 8.4 2.6 V4.2" fill="none" stroke="#c4c4c4" stroke-width="1.2"/><rect x="0.6" y="6.5" width="9.8" height="4.9" fill="none" stroke="#c4c4c4" stroke-width="1.2"/></svg>
<svg style="left:1446px;top:708px" width="5" height="15"><circle cx="2.5" cy="2.5" r="1.7" fill="#c4c4c4"/><circle cx="2.5" cy="7.3" r="1.7" fill="#c4c4c4"/><circle cx="2.5" cy="12.1" r="1.7" fill="#c4c4c4"/></svg>
<div class="a" style="left:977px;top:730px;width:488px;height:26px;background:#3c3c3c"></div>
<div class="a" style="left:977px;top:755px;width:488px;height:1px;background:#282828"></div>
<svg style="left:985px;top:736px" width="15" height="15"><path d="M7.5 0 V15 M0 7.5 H15" stroke="#d0d0d0" stroke-width="2"/></svg>
<div class="car" style="left:1005px;top:740px"></div>
<div class="fld" style="left:1032px;top:733px;width:246px;height:20px;border-radius:4px"></div>
<svg style="left:1039px;top:738px" width="10" height="10"><circle cx="4" cy="4" r="3" fill="none" stroke="#c4c4c4" stroke-width="1.6"/><path d="M6 6 L9.5 9.5" stroke="#c4c4c4" stroke-width="1.8"/></svg>
<div class="a" style="left:1257px;top:734px;width:20px;height:18px;background:#333;border-left:1px solid #222;border-radius:0 4px 4px 0"></div>
<svg style="left:1260px;top:735px" width="15" height="15" viewBox="0 0 15 15"><rect x="0.7" y="0.7" width="13.6" height="13.6" rx="1" fill="none" stroke="#a8a8a8" stroke-width="1.2"/><rect x="0.7" y="8.5" width="5.8" height="5.8" fill="none" stroke="#a8a8a8" stroke-width="1.2"/><path d="M6.5 8.5 L12 3 M8 3 H12 V7" fill="none" stroke="#a8a8a8" stroke-width="1.2"/></svg>
<div class="a" style="left:1282px;top:730px;width:1px;height:25px;background:#2c2c2c"></div>
<div class="a" style="left:1315px;top:730px;width:1px;height:25px;background:#2c2c2c"></div>
<div class="a" style="left:1347px;top:730px;width:1px;height:25px;background:#2c2c2c"></div>
<div class="a" style="left:1380px;top:730px;width:1px;height:25px;background:#2c2c2c"></div>
<div class="a" style="left:1412px;top:730px;width:1px;height:25px;background:#2c2c2c"></div>
<svg style="left:1290px;top:734px" width="16" height="17" viewBox="0 0 16 17"><rect x="1.5" y="0" width="7" height="7" fill="#c8c8c8"/><circle cx="5" cy="12" r="5" fill="#c8c8c8"/><path d="M11 5 L15.5 12 H6.5Z" fill="#c8c8c8"/></svg>
<svg style="left:1323px;top:736px" width="14" height="14" viewBox="0 0 14 14"><path d="M7 0.5 H13.5 V7 L6.5 14 L0 7.5Z" fill="#c8c8c8"/><circle cx="10.5" cy="3.5" r="1.3" fill="#3c3c3c"/></svg>
<svg style="left:1353px;top:734px" width="18" height="17" viewBox="0 0 18 17"><path d="M5 0 H13 L18 5 V12 L13 17 H5 L0 12 V5Z" fill="#d0d0d0"/><rect x="7.9" y="3" width="2.3" height="7.5" fill="#3c3c3c"/><circle cx="9" cy="13.2" r="1.4" fill="#3c3c3c"/></svg>
<svg style="left:1388px;top:735px" width="16" height="15" viewBox="0 0 16 15"><path d="M8 0 L10.3 5.2 L16 5.6 L11.6 9.3 L13 15 L8 11.9 L3 15 L4.4 9.3 L0 5.6 L5.7 5.2Z" fill="#8c8c8c"/></svg>
<svg style="left:1420px;top:738px" width="18" height="11" viewBox="0 0 18 11"><path d="M0.5 5.5 Q9 -3 17.5 5.5 Q9 14 0.5 5.5Z" fill="none" stroke="#6a6a6a" stroke-width="1.5"/><circle cx="9" cy="5" r="3.3" fill="#6a6a6a"/></svg>
<div class="t" style="left:1440px;top:733px;color:#c4c4c4">26</div>
<div class="a" style="left:977px;top:756px;width:488px;height:357px;background:#383838"></div>
<div class="a" style="left:1232px;top:756px;width:1px;height:356px;background:#262626"></div>
<div class="a" style="left:977px;top:895px;width:255px;height:20px;background:#4a4a4a"></div>
<div class="tri" style="left:981px;top:762px"></div>
<svg style="left:998px;top:759px" width="16" height="13" viewBox="0 0 16 13"><path d="M8 0 L10 4.4 L15.5 4.8 L11.2 8 L12.8 13 L8 10.2 L3.2 13 L4.8 8 L0.5 4.8 L6 4.4Z" fill="#c8c8c8"/></svg>
<div class="t b" style="left:1020px;top:756px;font-size:15px;color:#d4d4d4">Favorites</div>
<svg style="left:1015px;top:779px" width="16" height="14" viewBox="0 0 16 14"><circle cx="5.8" cy="5.8" r="4.6" fill="none" stroke="#c4c4c4" stroke-width="1.5"/><path d="M9.3 9.3 L13.5 13.5" stroke="#c4c4c4" stroke-width="2"/></svg>
<div class="t" style="left:1036px;top:776px;color:#c8c8c8">All Materials</div>
<svg style="left:1015px;top:799px" width="16" height="14" viewBox="0 0 16 14"><circle cx="5.8" cy="5.8" r="4.6" fill="none" stroke="#c4c4c4" stroke-width="1.5"/><path d="M9.3 9.3 L13.5 13.5" stroke="#c4c4c4" stroke-width="2"/></svg>
<div class="t" style="left:1036px;top:796px;color:#c8c8c8">All Models</div>
<svg style="left:1015px;top:819px" width="16" height="14" viewBox="0 0 16 14"><circle cx="5.8" cy="5.8" r="4.6" fill="none" stroke="#c4c4c4" stroke-width="1.5"/><path d="M9.3 9.3 L13.5 13.5" stroke="#c4c4c4" stroke-width="2"/></svg>
<div class="t" style="left:1036px;top:816px;color:#c8c8c8">All Prefabs</div>
<div class="tri" style="left:981px;top:862px"></div>
<svg style="left:998px;top:859px" width="18" height="13" viewBox="0 0 18 13"><path d="M0 1 Q0 0 1 0 H5.5 L7 2 H13.5 Q14.5 2 14.5 3 V4.5 H3.5 L0 12Z" fill="#c8c8c8"/><path d="M3.8 5.5 H17.5 L14.5 13 H0.5Z" fill="#c8c8c8"/></svg>
<div class="t b" style="left:1020px;top:855px;font-size:15px;color:#d4d4d4">Assets</div>
<svg style="left:1015px;top:879px" width="16" height="12" viewBox="0 0 16 12"><path d="M0 1 Q0 0 1 0 H5.5 L7 1.8 H15 Q16 1.8 16 2.8 V11 Q16 12 15 12 H1 Q0 12 0 11Z" fill="#c8c8c8"/></svg>
<div class="t" style="left:1036px;top:875px;color:#c8c8c8">Material</div>
<svg style="left:1015px;top:899px" width="16" height="12" viewBox="0 0 16 12"><path d="M0 1 Q0 0 1 0 H5.5 L7 1.8 H15 Q16 1.8 16 2.8 V11 Q16 12 15 12 H1 Q0 12 0 11Z" fill="#c8c8c8"/></svg>
<div class="t" style="left:1036px;top:895px;color:#c8c8c8">Prefabs</div>
<svg style="left:1015px;top:919px" width="16" height="12" viewBox="0 0 16 12"><path d="M0 1 Q0 0 1 0 H5.5 L7 1.8 H15 Q16 1.8 16 2.8 V11 Q16 12 15 12 H1 Q0 12 0 11Z" fill="#c8c8c8"/></svg>
<div class="t" style="left:1036px;top:915px;color:#c8c8c8">Scenes</div>
<svg style="left:1015px;top:939px" width="16" height="12" viewBox="0 0 16 12"><path d="M0 1 Q0 0 1 0 H5.5 L7 1.8 H15 Q16 1.8 16 2.8 V11 Q16 12 15 12 H1 Q0 12 0 11Z" fill="#c8c8c8"/></svg>
<div class="t" style="left:1036px;top:935px;color:#c8c8c8">Scripts</div>
<svg style="left:1015px;top:959px" width="16" height="12" viewBox="0 0 16 12"><path d="M0 1 Q0 0 1 0 H5.5 L7 1.8 H15 Q16 1.8 16 2.8 V11 Q16 12 15 12 H1 Q0 12 0 11Z" fill="#c8c8c8"/></svg>
<div class="t" style="left:1036px;top:955px;color:#c8c8c8">Settings</div>
<svg style="left:1015px;top:979px" width="16" height="12" viewBox="0 0 16 12"><path d="M0 1 Q0 0 1 0 H5.5 L7 1.8 H15 Q16 1.8 16 2.8 V11 Q16 12 15 12 H1 Q0 12 0 11Z" fill="#c8c8c8"/></svg>
<div class="t" style="left:1036px;top:975px;color:#c8c8c8">TextMesh Pro</div>
<div class="trir" style="left:1000px;top:979px"></div>
<svg style="left:1015px;top:999px" width="16" height="12" viewBox="0 0 16 12"><path d="M0 1 Q0 0 1 0 H5.5 L7 1.8 H15 Q16 1.8 16 2.8 V11 Q16 12 15 12 H1 Q0 12 0 11Z" fill="#c8c8c8"/></svg>
<div class="t" style="left:1036px;top:995px;color:#c8c8c8">TutorialInfo</div>
<div class="trir" style="left:1000px;top:999px"></div>
<div class="trir" style="left:982px;top:1019px"></div>
<svg style="left:998px;top:1019px" width="16" height="12" viewBox="0 0 16 12"><path d="M0 1 Q0 0 1 0 H5.5 L7 1.8 H15 Q16 1.8 16 2.8 V11 Q16 12 15 12 H1 Q0 12 0 11Z" fill="#c8c8c8"/></svg>
<div class="t b" style="left:1020px;top:1015px;font-size:15px;color:#d4d4d4">Packages</div>
<div class="a" style="left:1233px;top:756px;width:232px;height:26px;background:#3e3e3e"></div>
<div class="t" style="left:1238px;top:759px;color:#b8b8b8">Assets</div>
<svg style="left:1295px;top:763px" width="7" height="11"><path d="M0.8 0.5 L6 5.5 L0.8 10.5" fill="none" stroke="#a8a8a8" stroke-width="1.5"/></svg>
<div class="t b" style="left:1308px;top:759px;font-size:15px;color:#d4d4d4">Prefabs</div>
<div class="a" style="left:1233px;top:782px;width:232px;height:304px;background:#333333"></div>
<div class="a" style="left:1233px;top:782px;width:232px;height:20px;background:#2e2e2e"></div>
<div class="a" style="left:1233px;top:803px;width:232px;height:20px;background:#4b4b4b"></div>
<svg style="left:1254px;top:784px" width="17" height="18" viewBox="0 0 17 18"><path d="M8.5 0.5 L16.5 4.6 V13.4 L8.5 17.5 L0.5 13.4 V4.6Z" fill="#66cdf6"/><path d="M0.5 4.6 L8.5 8.7 L16.5 4.6 M8.5 8.7 V17.5" fill="none" stroke="#2a3a44" stroke-width="1.2"/></svg>
<div class="t" style="left:1275px;top:784px;color:#c8c8c8">Bullet</div>
<svg style="left:1254px;top:804px" width="17" height="18" viewBox="0 0 17 18"><path d="M8.5 0.5 L16.5 4.6 V13.4 L8.5 17.5 L0.5 13.4 V4.6Z" fill="#66cdf6"/><path d="M0.5 4.6 L8.5 8.7 L16.5 4.6 M8.5 8.7 V17.5" fill="none" stroke="#2a3a44" stroke-width="1.2"/></svg>
<div class="t" style="left:1275px;top:804px;color:#d0d0d0">Player</div>
<div class="a" style="left:1233px;top:1086px;width:232px;height:26px;background:#3c3c3c"></div>
<svg style="left:1238px;top:1091px" width="17" height="18" viewBox="0 0 17 18"><path d="M8.5 0.5 L16.5 4.6 V13.4 L8.5 17.5 L0.5 13.4 V4.6Z" fill="#66cdf6"/><path d="M0.5 4.6 L8.5 8.7 L16.5 4.6 M8.5 8.7 V17.5" fill="none" stroke="#2a3a44" stroke-width="1.2"/></svg>
<div class="t" style="left:1258px;top:1090px;color:#c8c8c8">Assets/Prefabs/I</div>
<div class="a" style="left:1380px;top:1099px;width:66px;height:2px;background:#5e5e5e"></div>
<div class="a" style="left:1375px;top:1093px;width:13px;height:13px;border-radius:50%;background:#999"></div>
<div class="a" style="left:1465px;top:100px;width:2px;height:1013px;background:#191919"></div>
<div class="a" style="left:974px;top:698px;width:3px;height:415px;background:#141414"></div>
<!-- INSPECTOR -->
<div class="a" style="left:1467px;top:99px;width:452px;height:30px;background:#141414"></div>
<div class="tab" style="left:1467px;top:99px;width:119px;height:30px;border-top:3px solid #2f6aa6"></div>
<svg style="left:1481px;top:108px" width="13" height="13" viewBox="0 0 13 13"><circle cx="6.5" cy="6.5" r="6.5" fill="#c8c8c8"/><rect x="5.4" y="5.3" width="2.2" height="5.5" fill="#3c3c3c"/><circle cx="6.5" cy="3.3" r="1.2" fill="#3c3c3c"/></svg>
<div class="t" style="left:1499px;top:106px;color:#c8c8c8">Inspector</div>
<div class="t" style="left:1598px;top:106px;color:#c8c8c8">Multiplayer Play Mode</div>
<svg style="left:1877px;top:108px" width="11" height="12" viewBox="0 0 11 12"><path d="M2.8 6.5 V3 Q2.8 0.7 5.6 0.7 Q8.4 0.7 8.4 2.6 V4.2" fill="none" stroke="#c4c4c4" stroke-width="1.2"/><rect x="0.6" y="6.5" width="9.8" height="4.9" fill="none" stroke="#c4c4c4" stroke-width="1.2"/></svg>
<svg style="left:1900px;top:106px" width="5" height="15"><circle cx="2.5" cy="2.5" r="1.7" fill="#c4c4c4"/><circle cx="2.5" cy="7.3" r="1.7" fill="#c4c4c4"/><circle cx="2.5" cy="12.1" r="1.7" fill="#c4c4c4"/></svg>
<div class="a" style="left:1467px;top:128px;width:452px;height:985px;background:#3a3a3a"></div>
<div class="a" style="left:1467px;top:128px;width:437px;height:226px;background:#3c3c3c"></div>
<div class="a" style="left:1467px;top:203px;width:437px;height:37px;background:#393939"></div>
<!-- scrollbar -->
<div class="a" style="left:1904px;top:128px;width:15px;height:756px;background:#3a3a3a"></div>
<svg style="left:1908px;top:136px" width="10" height="6"><path d="M0 5.5 L5 0 L10 5.5Z" fill="#c4c4c4"/></svg>
<div class="a" style="left:1906px;top:150px;width:13px;height:674px;background:#5a5a5a;border-radius:6px"></div>
<svg style="left:1907px;top:872px" width="11" height="7"><path d="M0 0.5 L5.5 6.5 L11 0.5Z" fill="#c4c4c4"/></svg>
<!-- header -->
<div class="a" style="left:1474px;top:136px;width:40px;height:41px;background:#595959"></div>
<svg style="left:1483px;top:141px" width="25" height="34" viewBox="0 0 70 100"><defs><radialGradient id="cg2" cx="0.4" cy="0.15" r="0.8"><stop offset="0" stop-color="#5c6066"/><stop offset="0.5" stop-color="#3d4045"/><stop offset="1" stop-color="#2b2d31"/></radialGradient></defs><path d="M4 26 Q4 2 28 2 Q53 2 53 26 V72 Q53 96 28 96 Q4 96 4 72Z" fill="url(#cg2)"/><path d="M20 19 L42 20 L44 14 L60 14 L60 30 L45 32 L42 40 L25 41Z" fill="#2a2d31"/><path d="M12 52 L64 62 Q67 68 64 75 L12 63 Q9 57 12 52Z" fill="#25272b"/></svg>
<div class="t" style="left:1524px;top:134px;font-size:17px;line-height:22px;color:#b4b4b4">Player (Prefab Asset)</div>
<svg style="left:1867px;top:139px" width="13" height="13" viewBox="0 0 14 14"><circle cx="7" cy="7" r="7" fill="#c8c8c8"/><path d="M4.6 5.2 Q4.6 2.8 7 2.8 Q9.4 2.8 9.4 5 Q9.4 6.3 7.9 7 Q7 7.4 7 8.6" fill="none" stroke="#383838" stroke-width="1.7"/><circle cx="7" cy="11" r="1.1" fill="#383838"/></svg>
<svg style="left:1891px;top:138px" width="5" height="15"><circle cx="2.5" cy="2.5" r="1.7" fill="#c4c4c4"/><circle cx="2.5" cy="7.3" r="1.7" fill="#c4c4c4"/><circle cx="2.5" cy="12.1" r="1.7" fill="#c4c4c4"/></svg>
<div class="btn" style="left:1785px;top:165px;width:53px;height:21px;background:#4f4f4f;border:1px solid #2e2e2e"></div>
<svg style="left:1797px;top:170px" width="15" height="11" viewBox="0 0 15 11"><path d="M0 1 H2 M4 1 H15 M3 5.5 H5 M7 5.5 H15 M3 10 H5 M7 10 H15" stroke="#c4c4c4" stroke-width="1.4"/></svg>
<div class="car" style="left:1820px;top:173px"></div>
<div class="btn" style="left:1844px;top:165px;width:54px;height:21px;background:#4f4f4f;border:1px solid #2e2e2e"></div>
<div class="t" style="left:1852px;top:165px;color:#d0d0d0">Open</div>
<div class="a" style="left:1467px;top:202px;width:437px;height:1px;background:#232323"></div>
<div class="a" style="left:1467px;top:240px;width:437px;height:1px;background:#232323"></div>
<div class="t" style="left:1472px;top:247px;color:#c8c8c8">Root in Prefab Asset (Open for full editing support)</div>
<div class="a" style="left:1467px;top:275px;width:437px;height:1px;background:#232323"></div>
<svg style="left:1476px;top:287px" width="25" height="28" viewBox="0 0 25 28"><path d="M12.5 0.5 L24.5 6.8 V20.5 L12.5 27 L0.5 20.5 V6.8Z" fill="#66cdf6"/><path d="M0.5 6.8 L12.5 13 L24.5 6.8 M12.5 13 V27" fill="none" stroke="#2c3a44" stroke-width="1.3"/></svg>
<svg style="left:1500px;top:314px" width="10" height="6"><path d="M0 0 H9.5 L4.75 5.5Z" fill="#c4c4c4"/></svg>
<div class="a" style="left:1523px;top:289px;width:17px;height:17px;background:#2a2a2a;border:1px solid #1e1e1e;border-radius:3px"></div>
<svg style="left:1526px;top:292px" width="11" height="10"><path d="M1 5 L4 8.5 L10 1" fill="none" stroke="#eaeaea" stroke-width="1.8"/></svg>
<div class="fld" style="left:1548px;top:286px;width:255px;height:23px"></div>
<div class="t" style="left:1552px;top:290px;color:#8a8a8a">Player</div>
<div class="a" style="left:1808px;top:289px;width:17px;height:17px;background:#2a2a2a;border:1px solid #1e1e1e;border-radius:3px"></div>
<div class="t" style="left:1831px;top:288px;color:#c4c4c4">Static</div>
<div class="car" style="left:1886px;top:294px"></div>
<div class="t" style="left:1518px;top:318px;color:#a8a8a8">Tag</div>
<div class="dd" style="left:1549px;top:317px;width:151px;height:22px"></div>
<div class="t" style="left:1553px;top:318px;color:#d0d0d0">Untagged</div>
<div class="car" style="left:1683px;top:325px"></div>
<div class="t" style="left:1716px;top:318px;color:#a8a8a8">Layer</div>
<div class="dd" style="left:1761px;top:317px;width:138px;height:22px"></div>
<div class="t" style="left:1765px;top:318px;color:#d0d0d0">Default</div>
<div class="car" style="left:1881px;top:325px"></div>
<div class="a" style="left:1467px;top:353px;width:437px;height:2px;background:#1e1e1e"></div>
<!-- transform -->
<div class="a" style="left:1467px;top:355px;width:437px;height:27px;background:#3e3e3e"></div>
<div class="tri" style="left:1475px;top:365px;border-top-color:#6a6a6a"></div>
<svg style="left:1493px;top:361px" width="18" height="15" viewBox="0 0 18 15"><path d="M9 1.2 V6.2" stroke="#a8e05a" stroke-width="2.3" stroke-linecap="round"/><path d="M6.8 9.2 L2 12" stroke="#5cc6f5" stroke-width="2.3" stroke-linecap="round"/><path d="M11.2 9.2 L16 12" stroke="#f07040" stroke-width="2.3" stroke-linecap="round"/></svg>
<div class="t b" style="left:1543px;top:359px;font-size:15px;color:#d8d8d8">Transform</div>
<svg style="left:1831px;top:362px" width="13" height="13" viewBox="0 0 14 14"><circle cx="7" cy="7" r="6.9" fill="#c8c8c8"/><path d="M4.6 5.2 Q4.6 2.8 7 2.8 Q9.4 2.8 9.4 5 Q9.4 6.3 7.9 7 Q7 7.4 7 8.6" fill="none" stroke="#3e3e3e" stroke-width="1.8"/><circle cx="7" cy="11" r="1.2" fill="#3e3e3e"/></svg>
<svg style="left:1857px;top:363px" width="13" height="12" viewBox="0 0 13 12"><path d="M0 2.6 H7 M10.5 2.6 H12.5 M0 9.3 H1.2 M3.6 9.3 H12.5" stroke="#c8c8c8" stroke-width="1.4"/><rect x="7.2" y="0" width="3.2" height="5.6" rx="1.4" fill="#c8c8c8"/><rect x="4" y="6.3" width="2.6" height="5.6" rx="1.2" fill="#c8c8c8"/></svg>
<svg style="left:1886px;top:361px" width="5" height="15"><circle cx="2.5" cy="2.5" r="1.7" fill="#c4c4c4"/><circle cx="2.5" cy="7.3" r="1.7" fill="#c4c4c4"/><circle cx="2.5" cy="12.1" r="1.7" fill="#c4c4c4"/></svg>
<div class="t" style="left:1491px;top:390px;color:#c4c4c4">Position</div>
<div class="t" style="left:1648px;top:390px;color:#b4b4b4">X</div>
<div class="fld" style="left:1666px;top:388px;width:61px;height:23px"></div>
<div class="t" style="left:1670px;top:390px;color:#d2d2d2">0</div>
<div class="t" style="left:1734px;top:390px;color:#b4b4b4">Y</div>
<div class="fld" style="left:1752px;top:388px;width:61px;height:23px"></div>
<div class="t" style="left:1756px;top:390px;color:#d2d2d2">0</div>
<div class="t" style="left:1820px;top:390px;color:#b4b4b4">Z</div>
<div class="fld" style="left:1838px;top:388px;width:61px;height:23px"></div>
<div class="t" style="left:1842px;top:390px;color:#d2d2d2">0</div>
<div class="t" style="left:1491px;top:415px;color:#c4c4c4">Rotation</div>
<div class="t" style="left:1648px;top:415px;color:#b4b4b4">X</div>
<div class="fld" style="left:1666px;top:413px;width:61px;height:23px"></div>
<div class="t" style="left:1670px;top:415px;color:#d2d2d2">0</div>
<div class="t" style="left:1734px;top:415px;color:#b4b4b4">Y</div>
<div class="fld" style="left:1752px;top:413px;width:61px;height:23px"></div>
<div class="t" style="left:1756px;top:415px;color:#d2d2d2">180</div>
<div class="t" style="left:1820px;top:415px;color:#b4b4b4">Z</div>
<div class="fld" style="left:1838px;top:413px;width:61px;height:23px"></div>
<div class="t" style="left:1842px;top:415px;color:#d2d2d2">0</div>
<div class="t" style="left:1491px;top:440px;color:#c4c4c4">Scale</div>
<div class="t" style="left:1648px;top:440px;color:#b4b4b4">X</div>
<div class="fld" style="left:1666px;top:438px;width:61px;height:23px"></div>
<div class="t" style="left:1670px;top:440px;color:#d2d2d2">1</div>
<div class="t" style="left:1734px;top:440px;color:#b4b4b4">Y</div>
<div class="fld" style="left:1752px;top:438px;width:61px;height:23px"></div>
<div class="t" style="left:1756px;top:440px;color:#d2d2d2">1</div>
<div class="t" style="left:1820px;top:440px;color:#b4b4b4">Z</div>
<div class="fld" style="left:1838px;top:438px;width:61px;height:23px"></div>
<div class="t" style="left:1842px;top:440px;color:#d2d2d2">1</div>
<svg style="left:1620px;top:443px" width="16" height="12" viewBox="0 0 16 12"><path d="M6 2 H4 Q0.8 2 0.8 6 Q0.8 10 4 10 H6 M10 2 H12 Q15.2 2 15.2 6 Q15.2 10 12 10 H10" fill="none" stroke="#c4c4c4" stroke-width="1.4"/><path d="M2 0 L14 12" stroke="#c4c4c4" stroke-width="1.3"/></svg>
<div class="a" style="left:1467px;top:472px;width:437px;height:1px;background:#1e1e1e"></div>
<div class="a" style="left:1467px;top:473px;width:437px;height:27px;background:#3e3e3e"></div>
<div class="a" style="left:1467px;top:500px;width:437px;height:1px;background:#1e1e1e"></div>
<div class="trir" style="left:1477px;top:482px;border-left-color:#6a6a6a"></div>
<svg style="left:1493px;top:478px" width="17" height="17" viewBox="0 0 17 17"><path d="M1 1 H16 V16 H1Z M6 1 V16 M11 1 V16 M1 6 H16 M1 11 H16" fill="none" stroke="#5cc6f5" stroke-width="1.3"/></svg>
<div class="t b" style="left:1542px;top:476px;font-size:15px;color:#d8d8d8">Capsule (Mesh Filter)</div>
<svg style="left:1831px;top:480px" width="13" height="13" viewBox="0 0 14 14"><circle cx="7" cy="7" r="6.9" fill="#c8c8c8"/><path d="M4.6 5.2 Q4.6 2.8 7 2.8 Q9.4 2.8 9.4 5 Q9.4 6.3 7.9 7 Q7 7.4 7 8.6" fill="none" stroke="#3e3e3e" stroke-width="1.8"/><circle cx="7" cy="11" r="1.2" fill="#3e3e3e"/></svg>
<svg style="left:1857px;top:480px" width="13" height="12" viewBox="0 0 13 12"><path d="M0 2.6 H7 M10.5 2.6 H12.5 M0 9.3 H1.2 M3.6 9.3 H12.5" stroke="#c8c8c8" stroke-width="1.4"/><rect x="7.2" y="0" width="3.2" height="5.6" rx="1.4" fill="#c8c8c8"/><rect x="4" y="6.3" width="2.6" height="5.6" rx="1.2" fill="#c8c8c8"/></svg>
<svg style="left:1886px;top:479px" width="5" height="15"><circle cx="2.5" cy="2.5" r="1.7" fill="#c4c4c4"/><circle cx="2.5" cy="7.3" r="1.7" fill="#c4c4c4"/><circle cx="2.5" cy="12.1" r="1.7" fill="#c4c4c4"/></svg>
<div class="a" style="left:1467px;top:501px;width:437px;height:27px;background:#3e3e3e"></div>
<div class="a" style="left:1467px;top:528px;width:437px;height:1px;background:#1e1e1e"></div>
<div class="trir" style="left:1477px;top:510px;border-left-color:#6a6a6a"></div>
<svg style="left:1493px;top:506px" width="18" height="18" viewBox="0 0 18 18"><path d="M1 1 H16 V10 M1 1 V16 H7 M6 1 V16 M11 1 V9 M1 6 H16 M1 11 H8" fill="none" stroke="#5cc6f5" stroke-width="1.3"/><path d="M6 14.5 Q11.5 8.5 17.5 14.5 Q11.5 20 6 14.5Z" fill="#d0d0d0"/><circle cx="11.7" cy="14.3" r="2" fill="#3e3e3e"/></svg>
<div class="a" style="left:1517px;top:506px;width:17px;height:17px;background:#2a2a2a;border:1px solid #1e1e1e;border-radius:3px"></div>
<svg style="left:1520px;top:509px" width="11" height="10"><path d="M1 5 L4 8.5 L10 1" fill="none" stroke="#eaeaea" stroke-width="1.8"/></svg>
<div class="t b" style="left:1542px;top:504px;font-size:15px;color:#d8d8d8">Mesh Renderer</div>
<svg style="left:1831px;top:508px" width="13" height="13" viewBox="0 0 14 14"><circle cx="7" cy="7" r="6.9" fill="#c8c8c8"/><path d="M4.6 5.2 Q4.6 2.8 7 2.8 Q9.4 2.8 9.4 5 Q9.4 6.3 7.9 7 Q7 7.4 7 8.6" fill="none" stroke="#3e3e3e" stroke-width="1.8"/><circle cx="7" cy="11" r="1.2" fill="#3e3e3e"/></svg>
<svg style="left:1857px;top:508px" width="13" height="12" viewBox="0 0 13 12"><path d="M0 2.6 H7 M10.5 2.6 H12.5 M0 9.3 H1.2 M3.6 9.3 H12.5" stroke="#c8c8c8" stroke-width="1.4"/><rect x="7.2" y="0" width="3.2" height="5.6" rx="1.4" fill="#c8c8c8"/><rect x="4" y="6.3" width="2.6" height="5.6" rx="1.2" fill="#c8c8c8"/></svg>
<svg style="left:1886px;top:507px" width="5" height="15"><circle cx="2.5" cy="2.5" r="1.7" fill="#c4c4c4"/><circle cx="2.5" cy="7.3" r="1.7" fill="#c4c4c4"/><circle cx="2.5" cy="12.1" r="1.7" fill="#c4c4c4"/></svg>
<div class="a" style="left:1467px;top:529px;width:437px;height:27px;background:#3e3e3e"></div>
<div class="a" style="left:1467px;top:556px;width:437px;height:1px;background:#1e1e1e"></div>
<div class="trir" style="left:1477px;top:538px;border-left-color:#6a6a6a"></div>
<svg style="left:1496px;top:534px" width="12" height="19" viewBox="0 0 12 19"><rect x="0.5" y="0.5" width="10.5" height="18" rx="5.2" fill="#a8e05a"/><path d="M6.8 1 V18 M1 10.5 H10.5" stroke="#3e3e3e" stroke-width="1.1"/></svg>
<div class="a" style="left:1517px;top:534px;width:17px;height:17px;background:#2a2a2a;border:1px solid #1e1e1e;border-radius:3px"></div>
<svg style="left:1520px;top:537px" width="11" height="10"><path d="M1 5 L4 8.5 L10 1" fill="none" stroke="#eaeaea" stroke-width="1.8"/></svg>
<div class="t b" style="left:1542px;top:532px;font-size:15px;color:#d8d8d8">Capsule Collider</div>
<svg style="left:1831px;top:536px" width="13" height="13" viewBox="0 0 14 14"><circle cx="7" cy="7" r="6.9" fill="#c8c8c8"/><path d="M4.6 5.2 Q4.6 2.8 7 2.8 Q9.4 2.8 9.4 5 Q9.4 6.3 7.9 7 Q7 7.4 7 8.6" fill="none" stroke="#3e3e3e" stroke-width="1.8"/><circle cx="7" cy="11" r="1.2" fill="#3e3e3e"/></svg>
<svg style="left:1857px;top:536px" width="13" height="12" viewBox="0 0 13 12"><path d="M0 2.6 H7 M10.5 2.6 H12.5 M0 9.3 H1.2 M3.6 9.3 H12.5" stroke="#c8c8c8" stroke-width="1.4"/><rect x="7.2" y="0" width="3.2" height="5.6" rx="1.4" fill="#c8c8c8"/><rect x="4" y="6.3" width="2.6" height="5.6" rx="1.2" fill="#c8c8c8"/></svg>
<svg style="left:1886px;top:535px" width="5" height="15"><circle cx="2.5" cy="2.5" r="1.7" fill="#c4c4c4"/><circle cx="2.5" cy="7.3" r="1.7" fill="#c4c4c4"/><circle cx="2.5" cy="12.1" r="1.7" fill="#c4c4c4"/></svg>
<div class="a" style="left:1467px;top:558px;width:437px;height:27px;background:#3e3e3e"></div>
<div class="a" style="left:1467px;top:585px;width:437px;height:1px;background:#1e1e1e"></div>
<div class="trir" style="left:1477px;top:566px;border-left-color:#6a6a6a"></div>
<svg style="left:1493px;top:562px" width="18" height="18" viewBox="0 0 18 18"><circle cx="9" cy="9" r="8.2" fill="#a8e05a"/><path d="M9 9 V1.5 A7.5 7.5 0 0 1 16.5 9Z M9 9 V16.5 A7.5 7.5 0 0 1 1.5 9Z" fill="#2e2e2e"/></svg>
<div class="t b" style="left:1542px;top:562px;font-size:15px;color:#d8d8d8">Rigidbody</div>
<svg style="left:1831px;top:565px" width="13" height="13" viewBox="0 0 14 14"><circle cx="7" cy="7" r="6.9" fill="#c8c8c8"/><path d="M4.6 5.2 Q4.6 2.8 7 2.8 Q9.4 2.8 9.4 5 Q9.4 6.3 7.9 7 Q7 7.4 7 8.6" fill="none" stroke="#3e3e3e" stroke-width="1.8"/><circle cx="7" cy="11" r="1.2" fill="#3e3e3e"/></svg>
<svg style="left:1857px;top:565px" width="13" height="12" viewBox="0 0 13 12"><path d="M0 2.6 H7 M10.5 2.6 H12.5 M0 9.3 H1.2 M3.6 9.3 H12.5" stroke="#c8c8c8" stroke-width="1.4"/><rect x="7.2" y="0" width="3.2" height="5.6" rx="1.4" fill="#c8c8c8"/><rect x="4" y="6.3" width="2.6" height="5.6" rx="1.2" fill="#c8c8c8"/></svg>
<svg style="left:1886px;top:564px" width="5" height="15"><circle cx="2.5" cy="2.5" r="1.7" fill="#c4c4c4"/><circle cx="2.5" cy="7.3" r="1.7" fill="#c4c4c4"/><circle cx="2.5" cy="12.1" r="1.7" fill="#c4c4c4"/></svg>
<div class="a" style="left:1467px;top:586px;width:437px;height:27px;background:#3e3e3e"></div>
<div class="a" style="left:1467px;top:613px;width:437px;height:1px;background:#1e1e1e"></div>
<div class="trir" style="left:1477px;top:594px;border-left-color:#6a6a6a"></div>
<svg style="left:1494px;top:590px" width="15" height="18" viewBox="0 0 15 18"><path d="M1.5 0.5 H10 L14.5 5 V16 Q14.5 17.5 13 17.5 H1.5 Q0.5 17.5 0.5 16.5 V1.5 Q0.5 0.5 1.5 0.5Z" fill="#e6e6e6"/><path d="M5.5 5 L4.5 14 M9.5 5 L8.5 14 M3 8 H11.5 M2.5 11 H11" stroke="#3b8a3b" stroke-width="1.3"/></svg>
<div class="a" style="left:1517px;top:591px;width:17px;height:17px;background:#2a2a2a;border:1px solid #1e1e1e;border-radius:3px"></div>
<svg style="left:1520px;top:594px" width="11" height="10"><path d="M1 5 L4 8.5 L10 1" fill="none" stroke="#eaeaea" stroke-width="1.8"/></svg>
<div class="t b" style="left:1542px;top:590px;font-size:15px;color:#d8d8d8">Network Object</div>
<svg style="left:1831px;top:593px" width="13" height="13" viewBox="0 0 14 14"><circle cx="7" cy="7" r="6.9" fill="#c8c8c8"/><path d="M4.6 5.2 Q4.6 2.8 7 2.8 Q9.4 2.8 9.4 5 Q9.4 6.3 7.9 7 Q7 7.4 7 8.6" fill="none" stroke="#3e3e3e" stroke-width="1.8"/><circle cx="7" cy="11" r="1.2" fill="#3e3e3e"/></svg>
<svg style="left:1857px;top:593px" width="13" height="12" viewBox="0 0 13 12"><path d="M0 2.6 H7 M10.5 2.6 H12.5 M0 9.3 H1.2 M3.6 9.3 H12.5" stroke="#c8c8c8" stroke-width="1.4"/><rect x="7.2" y="0" width="3.2" height="5.6" rx="1.4" fill="#c8c8c8"/><rect x="4" y="6.3" width="2.6" height="5.6" rx="1.2" fill="#c8c8c8"/></svg>
<svg style="left:1886px;top:592px" width="5" height="15"><circle cx="2.5" cy="2.5" r="1.7" fill="#c4c4c4"/><circle cx="2.5" cy="7.3" r="1.7" fill="#c4c4c4"/><circle cx="2.5" cy="12.1" r="1.7" fill="#c4c4c4"/></svg>
<div class="a" style="left:1467px;top:614px;width:437px;height:27px;background:#3e3e3e"></div>
<div class="a" style="left:1467px;top:641px;width:437px;height:1px;background:#1e1e1e"></div>
<div class="trir" style="left:1477px;top:622px;border-left-color:#6a6a6a"></div>
<svg style="left:1494px;top:618px" width="15" height="18" viewBox="0 0 15 18"><path d="M1.5 0.5 H10 L14.5 5 V16 Q14.5 17.5 13 17.5 H1.5 Q0.5 17.5 0.5 16.5 V1.5 Q0.5 0.5 1.5 0.5Z" fill="#e6e6e6"/><path d="M5.5 5 L4.5 14 M9.5 5 L8.5 14 M3 8 H11.5 M2.5 11 H11" stroke="#3b8a3b" stroke-width="1.3"/></svg>
<div class="a" style="left:1517px;top:619px;width:17px;height:17px;background:#2a2a2a;border:1px solid #1e1e1e;border-radius:3px"></div>
<svg style="left:1520px;top:622px" width="11" height="10"><path d="M1 5 L4 8.5 L10 1" fill="none" stroke="#eaeaea" stroke-width="1.8"/></svg>
<div class="t b" style="left:1542px;top:618px;font-size:15px;color:#d8d8d8">Player Controller (Script)</div>
<svg style="left:1831px;top:621px" width="13" height="13" viewBox="0 0 14 14"><circle cx="7" cy="7" r="6.9" fill="#c8c8c8"/><path d="M4.6 5.2 Q4.6 2.8 7 2.8 Q9.4 2.8 9.4 5 Q9.4 6.3 7.9 7 Q7 7.4 7 8.6" fill="none" stroke="#3e3e3e" stroke-width="1.8"/><circle cx="7" cy="11" r="1.2" fill="#3e3e3e"/></svg>
<svg style="left:1857px;top:621px" width="13" height="12" viewBox="0 0 13 12"><path d="M0 2.6 H7 M10.5 2.6 H12.5 M0 9.3 H1.2 M3.6 9.3 H12.5" stroke="#c8c8c8" stroke-width="1.4"/><rect x="7.2" y="0" width="3.2" height="5.6" rx="1.4" fill="#c8c8c8"/><rect x="4" y="6.3" width="2.6" height="5.6" rx="1.2" fill="#c8c8c8"/></svg>
<svg style="left:1886px;top:620px" width="5" height="15"><circle cx="2.5" cy="2.5" r="1.7" fill="#c4c4c4"/><circle cx="2.5" cy="7.3" r="1.7" fill="#c4c4c4"/><circle cx="2.5" cy="12.1" r="1.7" fill="#c4c4c4"/></svg>
<div class="a" style="left:1467px;top:642px;width:437px;height:27px;background:#3e3e3e"></div>
<div class="a" style="left:1467px;top:669px;width:437px;height:1px;background:#1e1e1e"></div>
<div class="trir" style="left:1477px;top:650px;border-left-color:#6a6a6a"></div>
<svg style="left:1494px;top:646px" width="15" height="18" viewBox="0 0 15 18"><path d="M1.5 0.5 H10 L14.5 5 V16 Q14.5 17.5 13 17.5 H1.5 Q0.5 17.5 0.5 16.5 V1.5 Q0.5 0.5 1.5 0.5Z" fill="#e6e6e6"/><path d="M5.5 5 L4.5 14 M9.5 5 L8.5 14 M3 8 H11.5 M2.5 11 H11" stroke="#3b8a3b" stroke-width="1.3"/></svg>
<div class="a" style="left:1517px;top:647px;width:17px;height:17px;background:#2a2a2a;border:1px solid #1e1e1e;border-radius:3px"></div>
<svg style="left:1520px;top:650px" width="11" height="10"><path d="M1 5 L4 8.5 L10 1" fill="none" stroke="#eaeaea" stroke-width="1.8"/></svg>
<div class="t b" style="left:1542px;top:646px;font-size:15px;color:#d8d8d8">Network Transform</div>
<svg style="left:1831px;top:649px" width="13" height="13" viewBox="0 0 14 14"><circle cx="7" cy="7" r="6.9" fill="#c8c8c8"/><path d="M4.6 5.2 Q4.6 2.8 7 2.8 Q9.4 2.8 9.4 5 Q9.4 6.3 7.9 7 Q7 7.4 7 8.6" fill="none" stroke="#3e3e3e" stroke-width="1.8"/><circle cx="7" cy="11" r="1.2" fill="#3e3e3e"/></svg>
<svg style="left:1857px;top:649px" width="13" height="12" viewBox="0 0 13 12"><path d="M0 2.6 H7 M10.5 2.6 H12.5 M0 9.3 H1.2 M3.6 9.3 H12.5" stroke="#c8c8c8" stroke-width="1.4"/><rect x="7.2" y="0" width="3.2" height="5.6" rx="1.4" fill="#c8c8c8"/><rect x="4" y="6.3" width="2.6" height="5.6" rx="1.2" fill="#c8c8c8"/></svg>
<svg style="left:1886px;top:648px" width="5" height="15"><circle cx="2.5" cy="2.5" r="1.7" fill="#c4c4c4"/><circle cx="2.5" cy="7.3" r="1.7" fill="#c4c4c4"/><circle cx="2.5" cy="12.1" r="1.7" fill="#c4c4c4"/></svg>
<div class="a" style="left:1467px;top:671px;width:437px;height:27px;background:#3e3e3e"></div>
<div class="a" style="left:1467px;top:698px;width:437px;height:1px;background:#1e1e1e"></div>
<div class="tri" style="left:1475px;top:680px;border-top-color:#6a6a6a"></div>
<svg style="left:1494px;top:675px" width="15" height="18" viewBox="0 0 15 18"><path d="M1.5 0.5 H10 L14.5 5 V16 Q14.5 17.5 13 17.5 H1.5 Q0.5 17.5 0.5 16.5 V1.5 Q0.5 0.5 1.5 0.5Z" fill="#e6e6e6"/><path d="M5.5 5 L4.5 14 M9.5 5 L8.5 14 M3 8 H11.5 M2.5 11 H11" stroke="#3b8a3b" stroke-width="1.3"/></svg>
<div class="a" style="left:1517px;top:676px;width:17px;height:17px;background:#2a2a2a;border:1px solid #1e1e1e;border-radius:3px"></div>
<svg style="left:1520px;top:679px" width="11" height="10"><path d="M1 5 L4 8.5 L10 1" fill="none" stroke="#eaeaea" stroke-width="1.8"/></svg>
<div class="t b" style="left:1542px;top:674px;font-size:15px;color:#d8d8d8">Health (Script)</div>
<svg style="left:1831px;top:678px" width="13" height="13" viewBox="0 0 14 14"><circle cx="7" cy="7" r="6.9" fill="#c8c8c8"/><path d="M4.6 5.2 Q4.6 2.8 7 2.8 Q9.4 2.8 9.4 5 Q9.4 6.3 7.9 7 Q7 7.4 7 8.6" fill="none" stroke="#3e3e3e" stroke-width="1.8"/><circle cx="7" cy="11" r="1.2" fill="#3e3e3e"/></svg>
<svg style="left:1857px;top:678px" width="13" height="12" viewBox="0 0 13 12"><path d="M0 2.6 H7 M10.5 2.6 H12.5 M0 9.3 H1.2 M3.6 9.3 H12.5" stroke="#c8c8c8" stroke-width="1.4"/><rect x="7.2" y="0" width="3.2" height="5.6" rx="1.4" fill="#c8c8c8"/><rect x="4" y="6.3" width="2.6" height="5.6" rx="1.2" fill="#c8c8c8"/></svg>
<svg style="left:1886px;top:677px" width="5" height="15"><circle cx="2.5" cy="2.5" r="1.7" fill="#c4c4c4"/><circle cx="2.5" cy="7.3" r="1.7" fill="#c4c4c4"/><circle cx="2.5" cy="12.1" r="1.7" fill="#c4c4c4"/></svg>
<div class="t" style="left:1491px;top:705px;color:#c4c4c4">Current Health</div>
<div class="fld" style="left:1647px;top:703px;width:149px;height:23px"></div>
<div class="t" style="left:1651px;top:705px;color:#d2d2d2">100</div>
<div class="t" style="left:1803px;top:701px;font-size:13px;color:#c4c4c4">NetworkVariable</div>
<div class="t" style="left:1491px;top:730px;color:#8a8a8a">Script</div>
<div class="fld" style="left:1647px;top:728px;width:251px;height:22px;background:#2e2e2e;border-color:#262626"></div>
<svg style="left:1653px;top:735px" width="11" height="12" viewBox="0 0 11 12"><path d="M0 0 H7.5 L11 3.5 V12 H0Z" fill="#9a9a9a"/><path d="M4 3 L3.3 10 M7 3 L6.3 10 M2 5.3 H9 M1.8 7.6 H8.8" stroke="#4c7a4c" stroke-width="0.9"/></svg>
<div class="t" style="left:1668px;top:731px;color:#9a9a9a">Health</div>
<svg style="left:1880px;top:733px" width="13" height="13"><circle cx="6.5" cy="6.5" r="5.6" fill="none" stroke="#8a8a8a" stroke-width="1.2"/><circle cx="6.5" cy="6.5" r="2" fill="#8a8a8a"/></svg>
<div class="t" style="left:1491px;top:754px;color:#c4c4c4">Max Health</div>
<div class="fld" style="left:1647px;top:753px;width:251px;height:22px"></div>
<div class="t" style="left:1651px;top:755px;color:#d2d2d2">100</div>
<div class="a" style="left:1467px;top:786px;width:437px;height:1px;background:#1e1e1e"></div>
<div class="a" style="left:1487px;top:795px;width:40px;height:40px;background:#595959"></div>
<div class="a" style="left:1489px;top:797px;width:36px;height:36px;border-radius:50%;background:radial-gradient(circle at 35% 30%,#6a6e72,#3a3d40 55%,#25272a)"></div>
<div class="t" style="left:1536px;top:793px;font-size:17px;line-height:22px;color:#8c8c8c">Lit (Material)</div>
<svg style="left:1848px;top:797px" width="13" height="13" viewBox="0 0 14 14"><circle cx="7" cy="7" r="6.9" fill="#c8c8c8"/><path d="M4.6 5.2 Q4.6 2.8 7 2.8 Q9.4 2.8 9.4 5 Q9.4 6.3 7.9 7 Q7 7.4 7 8.6" fill="none" stroke="#383838" stroke-width="1.8"/><circle cx="7" cy="11" r="1.2" fill="#383838"/></svg>
<svg style="left:1869px;top:798px" width="13" height="12" viewBox="0 0 13 12"><path d="M0 2.6 H7 M10.5 2.6 H12.5 M0 9.3 H1.2 M3.6 9.3 H12.5" stroke="#8c8c8c" stroke-width="1.4"/><rect x="7.2" y="0" width="3.2" height="5.6" rx="1.4" fill="#8c8c8c"/><rect x="4" y="6.3" width="2.6" height="5.6" rx="1.2" fill="#8c8c8c"/></svg>
<svg style="left:1892px;top:796px" width="5" height="15"><circle cx="2.5" cy="2.5" r="1.7" fill="#c4c4c4"/><circle cx="2.5" cy="7.3" r="1.7" fill="#c4c4c4"/><circle cx="2.5" cy="12.1" r="1.7" fill="#c4c4c4"/></svg>
<div class="t" style="left:1533px;top:823px;color:#8a8a8a">Shader</div>
<div class="a" style="left:1598px;top:823px;width:180px;height:21px;background:#454545;border-radius:3px"></div>
<div class="t" style="left:1602px;top:823px;color:#8e8e8e;width:160px;overflow:hidden">Universal Render Pipel</div>
<div class="car" style="left:1762px;top:831px;border-top-color:#8a8a8a"></div>
<div class="a" style="left:1784px;top:823px;width:55px;height:21px;background:#454545;border-radius:3px"></div>
<div class="t" style="left:1792px;top:823px;color:#8e8e8e">Edit...</div>
<div class="a" style="left:1845px;top:823px;width:53px;height:21px;background:#454545;border-radius:3px"></div>
<svg style="left:1857px;top:828px" width="14" height="11" viewBox="0 0 15 11"><path d="M0 1 H2 M4 1 H15 M3 5.5 H5 M7 5.5 H15 M3 10 H5 M7 10 H15" stroke="#8a8a8a" stroke-width="1.4"/></svg>
<div class="car" style="left:1881px;top:831px;border-top-color:#8a8a8a"></div>
<div class="trir" style="left:1477px;top:836px;border-left-color:#6a6a6a"></div>
<div class="a" style="left:1467px;top:860px;width:437px;height:1px;background:#2a2a2a"></div>
<div class="a" style="left:1467px;top:874px;width:437px;height:1px;background:#1e1e1e"></div>
<div class="a" style="left:1467px;top:884px;width:452px;height:1px;background:#1e1e1e"></div>
<div class="a" style="left:1467px;top:885px;width:452px;height:27px;background:#3c3c3c"></div>
<div class="t b" style="left:1476px;top:889px;font-size:15px;color:#d4d4d4">Player</div>
<div class="a" style="left:1527px;top:897px;width:369px;height:1px;background:#5a5a5a"></div>
<div class="a" style="left:1527px;top:901px;width:369px;height:1px;background:#5a5a5a"></div>
<div class="a" style="left:1898px;top:885px;width:1px;height:27px;background:#2a2a2a"></div>
<svg style="left:1907px;top:892px" width="5" height="15"><circle cx="2.5" cy="2.5" r="1.7" fill="#c4c4c4"/><circle cx="2.5" cy="7.3" r="1.7" fill="#c4c4c4"/><circle cx="2.5" cy="12.1" r="1.7" fill="#c4c4c4"/></svg>
<div class="a" style="left:1467px;top:912px;width:452px;height:1px;background:#1e1e1e"></div>
<div class="a" style="left:1467px;top:913px;width:452px;height:137px;background:#555555"></div>
<svg style="left:1655px;top:928px" width="70" height="100" viewBox="0 0 70 100"><defs><radialGradient id="cg" cx="0.35" cy="0.13" r="0.9"><stop offset="0" stop-color="#595b5f"/><stop offset="0.35" stop-color="#434549"/><stop offset="1" stop-color="#2b2d30"/></radialGradient><linearGradient id="gg" x1="0" y1="0" x2="0" y2="1"><stop offset="0" stop-color="#45484d"/><stop offset="0.5" stop-color="#2c2e32"/><stop offset="1" stop-color="#1f2124"/></linearGradient></defs><path d="M5 26 A23.5 23.5 0 0 1 52 26 V72 A23.5 23.5 0 0 1 5 72Z" fill="url(#cg)"/><path d="M51 21 L62 19 L61 34 L51 36Z" fill="#2e3135"/><path d="M21 27 L41 28 L39 42 L24 43Z" fill="#22252a"/><path d="M12.5 53.5 L66 63.5 Q68.5 69 66 75 L12.5 64.5 Q10.5 59 12.5 53.5Z" fill="url(#gg)"/></svg>
<div class="a" style="left:1467px;top:1050px;width:452px;height:1px;background:#1e1e1e"></div>
<div class="a" style="left:1467px;top:1051px;width:452px;height:62px;background:#3c3c3c"></div>
<div class="a" style="left:1890px;top:1058px;width:25px;height:19px;border-radius:10px;background:#1f4f9c"></div>
<svg style="left:1896px;top:1061px" width="13" height="13" viewBox="0 0 13 13"><path d="M1 1 H6.5 L12.5 7 L7 12.5 L1 6.5Z" fill="#f0f0f0"/><circle cx="4" cy="4" r="1.2" fill="#1f4f9c"/></svg>
<div class="t" style="left:1472px;top:1088px;color:#c4c4c4">AssetBundle</div>
<div class="dd" style="left:1587px;top:1086px;width:240px;height:22px"></div>
<div class="t" style="left:1592px;top:1088px;color:#d0d0d0">None</div>
<div class="car" style="left:1809px;top:1094px"></div>
<div class="dd" style="left:1834px;top:1086px;width:81px;height:22px"></div>
<div class="t" style="left:1839px;top:1088px;color:#d0d0d0">None</div>
<div class="car" style="left:1898px;top:1094px"></div>
<div class="a" style="left:1821px;top:1113px;width:1px;height:26px;background:#2a2a2a"></div>
<div class="a" style="left:1854px;top:1113px;width:1px;height:26px;background:#2a2a2a"></div>
<div class="a" style="left:1887px;top:1113px;width:1px;height:26px;background:#2a2a2a"></div>
<svg style="left:1828px;top:1119px" width="19" height="18" viewBox="0 0 19 18"><ellipse cx="9.5" cy="11" rx="6" ry="7" fill="#c4c4c4"/><circle cx="9.5" cy="4" r="3" fill="#c4c4c4"/><path d="M3 6 L0 4 M16 6 L19 4 M3 11 L0 11 M16 11 L19 11 M3.5 15 L0.5 17 M15.5 15 L18.5 17" stroke="#c4c4c4" stroke-width="1.3"/><path d="M1 1 L18 17" stroke="#161616" stroke-width="2.5"/><path d="M1 1 L18 17" stroke="#c4c4c4" stroke-width="1.2"/></svg>
<svg style="left:1862px;top:1119px" width="17" height="18" viewBox="0 0 17 18"><ellipse cx="8.5" cy="3.5" rx="7.5" ry="3" fill="#c4c4c4"/><path d="M1 5.5 V8 Q8.5 12 16 8 V5.5 Q8.5 9.5 1 5.5Z M1 10 V12.5 Q8.5 16.5 16 12.5 V10 Q8.5 14 1 10Z" fill="#c4c4c4"/><path d="M1 1 L16 17" stroke="#161616" stroke-width="2.5"/><path d="M1 1 L16 17" stroke="#c4c4c4" stroke-width="1.2"/></svg>
<svg style="left:1893px;top:1119px" width="19" height="19" viewBox="0 0 19 19"><circle cx="9.5" cy="9.5" r="8.5" fill="none" stroke="#c4c4c4" stroke-width="1.4"/><path d="M5.5 9.5 L8.5 12.5 L13.5 6.5" fill="none" stroke="#c4c4c4" stroke-width="1.5"/></svg>
<svg style="left:0;top:0" width="1919" height="1141"><path d="M1168 594 L1474 684.5" stroke="#f2f2f2" stroke-width="1.5"/><path d="M1483 686.8 L1471.8 686.9 L1473.8 680.6Z" fill="#f2f2f2"/><path d="M1266 948 L1284 845" stroke="#f2f2f2" stroke-width="1.5"/><path d="M1285.5 836.5 L1281 848.5 L1288 849.5Z" fill="#f2f2f2"/></svg>
</body></html>
